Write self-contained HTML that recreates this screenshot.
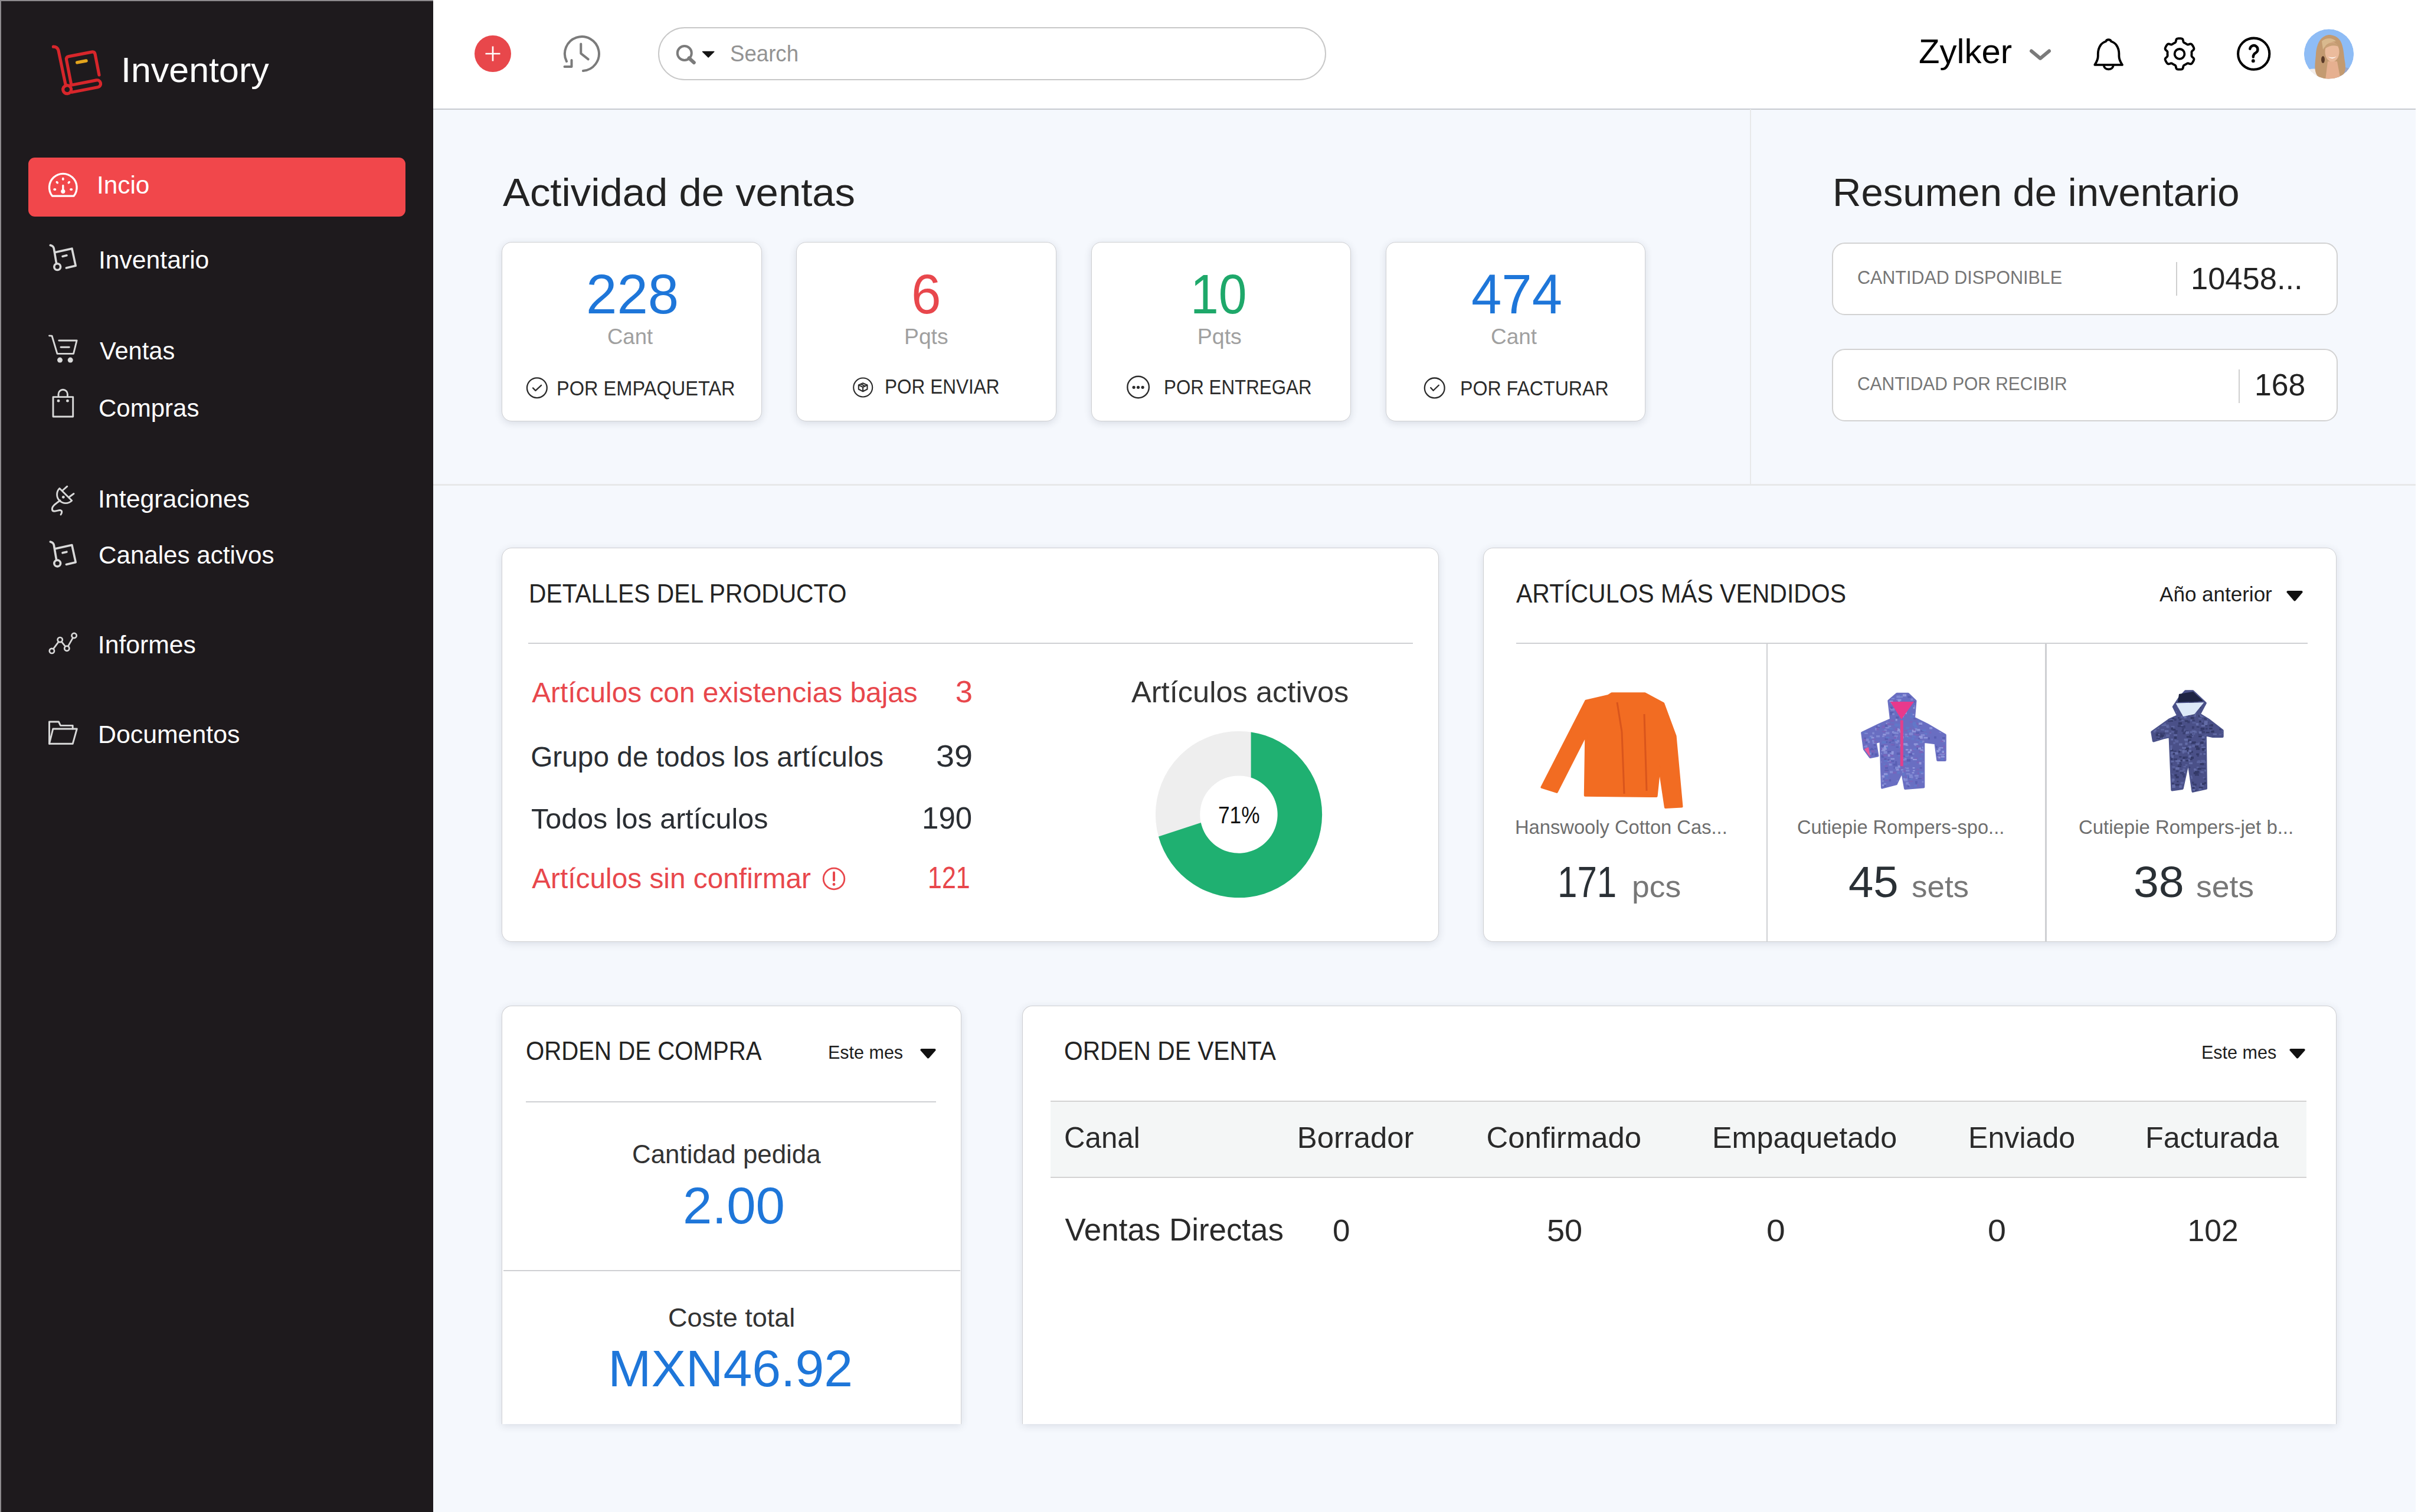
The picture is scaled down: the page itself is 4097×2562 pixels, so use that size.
<!DOCTYPE html>
<html><head><meta charset="utf-8"><title>Inventory</title>
<style>
html,body{margin:0;padding:0}
body{width:4097px;height:2562px;position:relative;overflow:hidden;background:#f5f8fd;font-family:"Liberation Sans",sans-serif}
.b{position:absolute}
.t{position:absolute;white-space:nowrap;line-height:1;font-family:"Liberation Sans",sans-serif;transform-origin:0 0}
</style></head><body>
<div class="b" style="left:0px;top:0px;width:734px;height:2562px;background:#1e1a1d"></div>
<div class="b" style="left:0px;top:0px;width:734px;height:1.5px;background:#8d8a8d"></div>
<div class="b" style="left:0px;top:0px;width:1.5px;height:2562px;background:#8d8a8d"></div>
<div class="b" style="left:48.3px;top:266.7px;width:638.3px;height:100px;background:#f1474b;border-radius:11px"></div>
<div class="b" style="left:734px;top:0px;width:3363px;height:183px;background:#ffffff"></div>
<div class="b" style="left:734px;top:183.5px;width:3359px;height:2px;background:#c9ccd0"></div>
<div class="b" style="left:4093px;top:0px;width:4px;height:2562px;background:#ffffff"></div>
<div class="b" style="left:1115px;top:46px;width:1132px;height:90px;border:2.5px solid #c8c8c8;border-radius:45px;box-sizing:border-box;background:#fff"></div>
<div class="b" style="left:734px;top:820px;width:3359px;height:3px;background:#e7e8e9"></div>
<div class="b" style="left:2964.8px;top:185px;width:2px;height:635px;background:#e8e9ea"></div>
<div class="b" style="left:850.2px;top:410px;width:440.8px;height:304.1px;background:#fff;border:1.5px solid #cfd0d3;border-radius:17px;box-sizing:border-box;box-shadow:0 3px 13px rgba(40,50,70,0.14)"></div>
<div class="b" style="left:1349.3px;top:410px;width:440.8px;height:304.1px;background:#fff;border:1.5px solid #cfd0d3;border-radius:17px;box-sizing:border-box;box-shadow:0 3px 13px rgba(40,50,70,0.14)"></div>
<div class="b" style="left:1848.5px;top:410px;width:440.8px;height:304.1px;background:#fff;border:1.5px solid #cfd0d3;border-radius:17px;box-sizing:border-box;box-shadow:0 3px 13px rgba(40,50,70,0.14)"></div>
<div class="b" style="left:2347.6px;top:410px;width:440.8px;height:304.1px;background:#fff;border:1.5px solid #cfd0d3;border-radius:17px;box-sizing:border-box;box-shadow:0 3px 13px rgba(40,50,70,0.14)"></div>
<div class="b" style="left:3104px;top:411px;width:856.5px;height:123px;background:#fff;border:2.5px solid #d2d2d2;border-radius:22px;box-sizing:border-box"></div>
<div class="b" style="left:3104px;top:591px;width:856.5px;height:123px;background:#fff;border:2.5px solid #d2d2d2;border-radius:22px;box-sizing:border-box"></div>
<div class="b" style="left:3687px;top:443.5px;width:2px;height:57px;background:#cfcfcf"></div>
<div class="b" style="left:3792.5px;top:626px;width:2px;height:57px;background:#cfcfcf"></div>
<div class="b" style="left:850.3px;top:928.1px;width:1587.4px;height:667.9px;background:#fff;border:1.5px solid #cfd0d3;box-sizing:border-box;box-shadow:0 3px 14px rgba(40,50,70,0.13);border-radius:17px"></div>
<div class="b" style="left:2513px;top:928.1px;width:1446.4px;height:667.9px;background:#fff;border:1.5px solid #cfd0d3;box-sizing:border-box;box-shadow:0 3px 14px rgba(40,50,70,0.13);border-radius:17px"></div>
<div class="b" style="left:850.3px;top:1703.8px;width:779.2px;height:709px;background:#fff;border:1.5px solid #cfd0d3;box-sizing:border-box;box-shadow:0 3px 14px rgba(40,50,70,0.13);border-radius:17px 17px 0 0;border-bottom:none"></div>
<div class="b" style="left:1731.7px;top:1703.8px;width:2227.7px;height:709px;background:#fff;border:1.5px solid #cfd0d3;box-sizing:border-box;box-shadow:0 3px 14px rgba(40,50,70,0.13);border-radius:17px 17px 0 0;border-bottom:none"></div>
<div class="b" style="left:894.5px;top:1088.5px;width:1499px;height:2.5px;background:#cfd0d3"></div>
<div class="b" style="left:2569px;top:1088.5px;width:1341px;height:2.5px;background:#cfd0d3"></div>
<div class="b" style="left:2992.5px;top:1090px;width:2.5px;height:505px;background:#cfd0d3"></div>
<div class="b" style="left:3465.4px;top:1090px;width:2.5px;height:505px;background:#cfd0d3"></div>
<div class="b" style="left:891px;top:1865.5px;width:694.6px;height:2.5px;background:#cfd0d3"></div>
<div class="b" style="left:853px;top:2151.5px;width:774px;height:2.5px;background:#cfd0d3"></div>
<div class="b" style="left:1780.4px;top:1865px;width:2127.6px;height:131px;background:#f4f6f6;border-top:2.5px solid #d3d3d3;border-bottom:2.5px solid #d3d3d3;box-sizing:border-box"></div>
<svg width="4097" height="2562" viewBox="0 0 4097 2562" style="position:absolute;left:0;top:0"><g transform="translate(113.7,151.7) rotate(-11)" fill="none" stroke="#d7262b" stroke-width="5.2" stroke-linecap="round" stroke-linejoin="round"><path d="M-9,-75.7 Q-2.5,-74.5 -1.8,-68 L-1,-7"/><circle cx="0" cy="0" r="7"/><path d="M8.5,-8 L8.5,-49.5 Q8.5,-54.5 13.5,-54.5 L53,-54.5 Q58,-54.5 58,-49.5 L58,-14"/><path d="M7,-6 L51.8,-6 A6,6 0 0 1 51.8,6 L7,6"/><path d="M25.5,-41.7 L41,-41.7" stroke="#e3a41d" stroke-width="5.5"/></g><g fill="none" stroke="#fff" stroke-width="3.3" stroke-linejoin="round" stroke-linecap="round"><path d="M88.5,332.1 A23.3,23.3 0 1 1 125.1,332.1 Z"/><path d="M106.8,314.5 L106.8,322"/></g><g fill="#fff"><circle cx="106.8" cy="324.3" r="3.6"/><ellipse cx="106.8" cy="303.2" rx="1.9" ry="2.7"/><ellipse cx="96.8" cy="309.2" rx="2.6" ry="1.9" transform="rotate(45 96.8 309.2)"/><ellipse cx="116.8" cy="309.2" rx="2.6" ry="1.9" transform="rotate(-45 116.8 309.2)"/><ellipse cx="92.8" cy="321" rx="2.6" ry="1.9"/><ellipse cx="120.6" cy="321" rx="2.6" ry="1.9"/></g><g fill="none" stroke="#d9d9d9" stroke-linecap="round" stroke-linejoin="round" stroke-width="3.6" transform="translate(0,0)"><path d="M85.3,415.6 Q90.5,417 91.3,421 L95.6,446.5"/><circle cx="97.2" cy="452.1" r="5.4"/><path d="M93.6,427.4 L121.9,421.2 L128.2,450.3 L112.3,454"/><path d="M106,434.4 L112.9,432.8"/></g><g fill="none" stroke="#d9d9d9" stroke-linecap="round" stroke-linejoin="round" stroke-width="3.6" transform="translate(0,502.4)"><path d="M85.3,415.6 Q90.5,417 91.3,421 L95.6,446.5"/><circle cx="97.2" cy="452.1" r="5.4"/><path d="M93.6,427.4 L121.9,421.2 L128.2,450.3 L112.3,454"/><path d="M106,434.4 L112.9,432.8"/></g><g fill="none" stroke="#d9d9d9" stroke-linecap="round" stroke-linejoin="round" stroke-width="2.9"><path d="M83.5,568.9 L88,569.1 L97,599.4 L124.5,599.4 L130.1,577 L99.8,577"/><path d="M103.1,588.2 L117.2,588.2"/></g><circle cx="101.5" cy="610.1" r="4.5" fill="#d9d9d9"/><circle cx="119.2" cy="610.1" r="4.5" fill="#d9d9d9"/><g fill="none" stroke="#d9d9d9" stroke-linecap="round" stroke-linejoin="round" stroke-width="2.9"><rect x="90" y="672.6" width="33.7" height="33.4"/><path d="M99,672 L99,667.9 A7.7,7.7 0 0 1 114.4,667.9 L114.4,672"/></g><circle cx="99" cy="679.2" r="2.4" fill="#d9d9d9"/><circle cx="114.4" cy="679.2" r="2.4" fill="#d9d9d9"/><g fill="none" stroke="#d9d9d9" stroke-linecap="round" stroke-linejoin="round" stroke-width="2.9"><path d="M100.9,827.5 L121.7,848.3 A14.7,14.7 0 0 1 100.9,827.5 Z"/><path d="M106,831 L113.8,824.2"/><path d="M117.5,842 L125,836.5"/><path d="M102,848 C95,853 87,858 88.5,864 C90,869 98,864 102,864.5 C106,865.5 105,869 103,872"/></g><circle cx="107.3" cy="842.3" r="2.4" fill="#d9d9d9"/><g fill="none" stroke="#d9d9d9" stroke-linecap="round" stroke-linejoin="round" stroke-width="2.7"><path d="M87.9,1102.9 L101.7,1084.1 L113.3,1098.7 L125.6,1077"/></g><circle cx="87.9" cy="1102.9" r="4.1" fill="#1e1a1d" stroke="#d9d9d9" stroke-width="2.7"/><circle cx="101.7" cy="1084.1" r="4.1" fill="#1e1a1d" stroke="#d9d9d9" stroke-width="2.7"/><circle cx="113.3" cy="1098.7" r="4.1" fill="#1e1a1d" stroke="#d9d9d9" stroke-width="2.7"/><circle cx="125.6" cy="1077" r="4.1" fill="#1e1a1d" stroke="#d9d9d9" stroke-width="2.7"/><g fill="none" stroke="#d9d9d9" stroke-linecap="round" stroke-linejoin="round" stroke-width="2.9"><path d="M83.5,1260.3 L83.5,1223 L99.4,1223 L102.5,1229.4 L123.2,1229.4 L123.2,1235"/><path d="M89.8,1235 L130.3,1235 L123.2,1260.3 L83.5,1260.3 Z"/></g><circle cx="835" cy="91" r="31" fill="#e8474b"/><path d="M822.5,91 L847.5,91 M835,78.5 L835,103.5" stroke="#fff" stroke-width="2.7"/><g fill="none" stroke="#7b7b7b" stroke-width="4" stroke-linecap="round" stroke-linejoin="round"><path d="M988,120 A29,29 0 1 0 960,104"/><path d="M968.5,102 L968.5,113 L956.5,113"/><path d="M984.3,74.5 L984.3,90.6 L996.7,100.3"/></g><g fill="none" stroke="#7b7b7b" stroke-linecap="round"><circle cx="1159.8" cy="90" r="12" stroke-width="4"/><path d="M1167.5,98.5 L1175.8,106" stroke-width="6"/></g><path d="M1190.5,87.5 L1209.8,87.5 L1200.2,97 Z" fill="#151515" stroke="#151515" stroke-width="1.5" stroke-linejoin="round"/><path d="M3442,86.5 L3457,99 L3472,86.5" fill="none" stroke="#7a7a7a" stroke-width="6" stroke-linecap="round" stroke-linejoin="round"/><g fill="none" stroke="#000" stroke-width="3.8" stroke-linecap="round" stroke-linejoin="round"><path d="M3549.3,109.8 C3552.5,105 3554.8,101 3554.8,95 L3554.8,91 C3555,80 3560.5,72.5 3568,70.3 A5,5 0 0 1 3577.2,70.3 C3584.7,72.5 3590.2,80 3590.4,91 L3590.4,95 C3590.4,101 3592.7,105 3595.9,109.8 Z"/><path d="M3564.8,111.5 A8,7 0 0 0 3580.6,111.5"/></g><g fill="none" stroke="#000" stroke-width="3.8" stroke-linejoin="round"><path d="M3713.50,91.40 L3713.50,91.76 L3713.49,92.12 L3713.48,92.47 L3713.46,92.83 L3713.45,93.19 L3713.43,93.55 L3713.41,93.91 L3713.41,94.27 L3713.43,94.64 L3713.50,95.01 L3713.64,95.41 L3713.89,95.84 L3714.31,96.32 L3714.90,96.86 L3715.60,97.46 L3716.29,98.08 L3716.84,98.69 L3717.20,99.26 L3717.37,99.79 L3717.42,100.29 L3717.38,100.76 L3717.28,101.21 L3717.15,101.65 L3716.99,102.08 L3716.81,102.50 L3716.63,102.92 L3716.43,103.34 L3716.22,103.75 L3716.00,104.15 L3715.78,104.55 L3715.54,104.95 L3715.30,105.34 L3715.05,105.72 L3714.79,106.10 L3714.52,106.47 L3714.24,106.83 L3713.95,107.19 L3713.64,107.52 L3713.29,107.83 L3712.91,108.10 L3712.46,108.31 L3711.91,108.42 L3711.23,108.40 L3710.43,108.23 L3709.55,107.95 L3708.68,107.63 L3707.91,107.39 L3707.29,107.27 L3706.79,107.27 L3706.38,107.34 L3706.02,107.48 L3705.69,107.64 L3705.38,107.83 L3705.07,108.02 L3704.77,108.21 L3704.47,108.41 L3704.17,108.60 L3703.86,108.79 L3703.56,108.97 L3703.25,109.15 L3702.94,109.33 L3702.63,109.50 L3702.31,109.67 L3701.99,109.84 L3701.67,110.00 L3701.35,110.16 L3701.04,110.33 L3700.72,110.51 L3700.41,110.71 L3700.12,110.96 L3699.84,111.28 L3699.60,111.71 L3699.39,112.31 L3699.22,113.09 L3699.06,114.00 L3698.86,114.91 L3698.61,115.69 L3698.29,116.29 L3697.92,116.70 L3697.51,116.99 L3697.08,117.19 L3696.64,117.33 L3696.20,117.44 L3695.74,117.52 L3695.29,117.58 L3694.83,117.62 L3694.38,117.66 L3693.92,117.68 L3693.46,117.70 L3693.00,117.70 L3692.54,117.70 L3692.08,117.68 L3691.62,117.66 L3691.17,117.62 L3690.71,117.58 L3690.26,117.52 L3689.80,117.44 L3689.36,117.33 L3688.92,117.19 L3688.49,116.99 L3688.08,116.70 L3687.71,116.29 L3687.39,115.69 L3687.14,114.91 L3686.94,114.00 L3686.78,113.09 L3686.61,112.31 L3686.40,111.71 L3686.16,111.28 L3685.88,110.96 L3685.59,110.71 L3685.28,110.51 L3684.96,110.33 L3684.65,110.16 L3684.33,110.00 L3684.01,109.84 L3683.69,109.67 L3683.37,109.50 L3683.06,109.33 L3682.75,109.15 L3682.44,108.97 L3682.14,108.79 L3681.83,108.60 L3681.53,108.41 L3681.23,108.21 L3680.93,108.02 L3680.62,107.83 L3680.31,107.64 L3679.98,107.48 L3679.62,107.34 L3679.21,107.27 L3678.71,107.27 L3678.09,107.39 L3677.32,107.63 L3676.45,107.95 L3675.57,108.23 L3674.77,108.40 L3674.09,108.42 L3673.54,108.31 L3673.09,108.10 L3672.71,107.83 L3672.36,107.52 L3672.05,107.19 L3671.76,106.83 L3671.48,106.47 L3671.21,106.10 L3670.95,105.72 L3670.70,105.34 L3670.46,104.95 L3670.22,104.55 L3670.00,104.15 L3669.78,103.75 L3669.57,103.34 L3669.37,102.92 L3669.19,102.50 L3669.01,102.08 L3668.85,101.65 L3668.72,101.21 L3668.62,100.76 L3668.58,100.29 L3668.63,99.79 L3668.80,99.26 L3669.16,98.69 L3669.71,98.08 L3670.40,97.46 L3671.10,96.86 L3671.69,96.32 L3672.11,95.84 L3672.36,95.41 L3672.50,95.01 L3672.57,94.64 L3672.59,94.27 L3672.59,93.91 L3672.57,93.55 L3672.55,93.19 L3672.54,92.83 L3672.52,92.47 L3672.51,92.12 L3672.50,91.76 L3672.50,91.40 L3672.50,91.04 L3672.51,90.68 L3672.52,90.33 L3672.54,89.97 L3672.55,89.61 L3672.57,89.25 L3672.59,88.89 L3672.59,88.53 L3672.57,88.16 L3672.50,87.79 L3672.36,87.39 L3672.11,86.96 L3671.69,86.48 L3671.10,85.94 L3670.40,85.34 L3669.71,84.72 L3669.16,84.11 L3668.80,83.54 L3668.63,83.01 L3668.58,82.51 L3668.62,82.04 L3668.72,81.59 L3668.85,81.15 L3669.01,80.72 L3669.19,80.30 L3669.37,79.88 L3669.57,79.46 L3669.78,79.05 L3670.00,78.65 L3670.22,78.25 L3670.46,77.85 L3670.70,77.46 L3670.95,77.08 L3671.21,76.70 L3671.48,76.33 L3671.76,75.97 L3672.05,75.61 L3672.36,75.28 L3672.71,74.97 L3673.09,74.70 L3673.54,74.49 L3674.09,74.38 L3674.77,74.40 L3675.57,74.57 L3676.45,74.85 L3677.32,75.17 L3678.09,75.41 L3678.71,75.53 L3679.21,75.53 L3679.62,75.46 L3679.98,75.32 L3680.31,75.16 L3680.62,74.97 L3680.93,74.78 L3681.23,74.59 L3681.53,74.39 L3681.83,74.20 L3682.14,74.01 L3682.44,73.83 L3682.75,73.65 L3683.06,73.47 L3683.37,73.30 L3683.69,73.13 L3684.01,72.96 L3684.33,72.80 L3684.65,72.64 L3684.96,72.47 L3685.28,72.29 L3685.59,72.09 L3685.88,71.84 L3686.16,71.52 L3686.40,71.09 L3686.61,70.49 L3686.78,69.71 L3686.94,68.80 L3687.14,67.89 L3687.39,67.11 L3687.71,66.51 L3688.08,66.10 L3688.49,65.81 L3688.92,65.61 L3689.36,65.47 L3689.80,65.36 L3690.26,65.28 L3690.71,65.22 L3691.17,65.18 L3691.62,65.14 L3692.08,65.12 L3692.54,65.10 L3693.00,65.10 L3693.46,65.10 L3693.92,65.12 L3694.38,65.14 L3694.83,65.18 L3695.29,65.22 L3695.74,65.28 L3696.20,65.36 L3696.64,65.47 L3697.08,65.61 L3697.51,65.81 L3697.92,66.10 L3698.29,66.51 L3698.61,67.11 L3698.86,67.89 L3699.06,68.80 L3699.22,69.71 L3699.39,70.49 L3699.60,71.09 L3699.84,71.52 L3700.12,71.84 L3700.41,72.09 L3700.72,72.29 L3701.04,72.47 L3701.35,72.64 L3701.67,72.80 L3701.99,72.96 L3702.31,73.13 L3702.63,73.30 L3702.94,73.47 L3703.25,73.65 L3703.56,73.83 L3703.86,74.01 L3704.17,74.20 L3704.47,74.39 L3704.77,74.59 L3705.07,74.78 L3705.38,74.97 L3705.69,75.16 L3706.02,75.32 L3706.38,75.46 L3706.79,75.53 L3707.29,75.53 L3707.91,75.41 L3708.68,75.17 L3709.55,74.85 L3710.43,74.57 L3711.23,74.40 L3711.91,74.38 L3712.46,74.49 L3712.91,74.70 L3713.29,74.97 L3713.64,75.28 L3713.95,75.61 L3714.24,75.97 L3714.52,76.33 L3714.79,76.70 L3715.05,77.08 L3715.30,77.46 L3715.54,77.85 L3715.78,78.25 L3716.00,78.65 L3716.22,79.05 L3716.43,79.46 L3716.63,79.88 L3716.81,80.30 L3716.99,80.72 L3717.15,81.15 L3717.28,81.59 L3717.38,82.04 L3717.42,82.51 L3717.37,83.01 L3717.20,83.54 L3716.84,84.11 L3716.29,84.72 L3715.60,85.34 L3714.90,85.94 L3714.31,86.48 L3713.89,86.96 L3713.64,87.39 L3713.50,87.79 L3713.43,88.16 L3713.41,88.53 L3713.41,88.89 L3713.43,89.25 L3713.45,89.61 L3713.46,89.97 L3713.48,90.33 L3713.49,90.68 L3713.50,91.04 Z"/><circle cx="3693" cy="91.4" r="8.4"/></g><g fill="none" stroke="#000" stroke-linecap="round"><circle cx="3818.7" cy="91.2" r="26.6" stroke-width="4.1"/><path d="M3812.3,82.8 A6.6,6.6 0 1 1 3822.5,89.2 C3819,91 3817.8,93 3817.8,96.5" stroke-width="4.4"/></g><circle cx="3817.8" cy="103.2" r="2.9" fill="#000"/><defs><clipPath id="av"><circle cx="3946" cy="91.4" r="42.2"/></clipPath></defs><g clip-path="url(#av)"><circle cx="3946" cy="91.4" r="42.2" fill="#8ebcf5"/><path d="M3900,122 C3912,116 3924,114 3934,120 L3940,136 L3895,136 Z" fill="#f3ede9"/><path d="M3962,114 C3972,112 3984,116 3990,122 L3990,136 L3960,136 Z" fill="#9aa6c8"/><path d="M3946,59 C3931,61 3925,76 3924,92 C3923,106 3920,118 3926,128 C3930,134 3944,136 3952,132 L3962,134 C3972,130 3976,118 3973,104 C3971,92 3971,74 3963,66 C3958,61 3952,59 3946,59 Z" fill="#c39a70"/><path d="M3934,70 C3940,64 3952,63 3958,70 C3950,70 3942,74 3936,84 Z" fill="#d9b98e"/><path d="M3944,104 L3960,104 L3966,136 L3940,136 Z" fill="#e6b090"/><ellipse cx="3951.5" cy="88" rx="12" ry="16.5" fill="#ebbb9c"/><path d="M3940,78 C3946,70 3958,70 3964,80 C3958,76 3948,76 3940,82 Z" fill="#c8a077"/><path d="M3944.5,96 Q3952,102.5 3959,95.5 Q3952,99 3944.5,96 Z" fill="#fff"/><ellipse cx="3936" cy="101" rx="3" ry="6" fill="#5a3a28"/></g><g fill="none" stroke="#2b2b2b" stroke-linecap="round" stroke-linejoin="round" stroke-width="2.3"><circle cx="909.85" cy="657.2" r="16.9"/><path d="M903,657.4 L907.4,661.9 L917.1,652.8"/></g><g fill="none" stroke="#2b2b2b" stroke-linecap="round" stroke-linejoin="round" stroke-width="2.1"><circle cx="1462.2" cy="656.5" r="16"/><path d="M1462.1,649.2 L1469.5,652.4 L1469.5,659.5 L1462.1,663.3 L1454.8,659.5 L1454.8,652.4 Z M1454.8,652.4 L1462.1,656 L1469.5,652.4 M1462.1,656 L1462.1,663.3 M1458.5,650.8 L1466,654.4"/></g><g fill="none" stroke="#2b2b2b" stroke-linecap="round" stroke-linejoin="round" stroke-width="2.4"><circle cx="1928.6" cy="656" r="18.3"/></g><g fill="#2b2b2b"><circle cx="1921.1" cy="656.3" r="2.6"/><circle cx="1928.5" cy="656.3" r="2.6"/><circle cx="1936.1" cy="656.3" r="2.6"/></g><g fill="none" stroke="#2b2b2b" stroke-linecap="round" stroke-linejoin="round" stroke-width="2.3"><circle cx="2430.7" cy="657.4" r="16.9"/><path d="M2424.2,656.9 L2428.5,661.8 L2437.8,652.7"/></g><g fill="none" stroke="#e8474c" stroke-linecap="round"><circle cx="1413" cy="1489" r="17.8" stroke-width="2.8"/><path d="M1413,1478.5 L1413,1491.5" stroke-width="4"/></g><circle cx="1413" cy="1498.5" r="2.4" fill="#e8474c"/><path d="M3876.5,1003 L3899.6,1003 L3888.05,1016.5 Z" fill="#111" stroke="#111" stroke-width="4" stroke-linejoin="round"/><path d="M1561.5,1779 L1583.6,1779 L1572.55,1791.5 Z" fill="#111" stroke="#111" stroke-width="4" stroke-linejoin="round"/><path d="M3881.5,1779 L3903.7,1779 L3892.6,1791.5 Z" fill="#111" stroke="#111" stroke-width="4" stroke-linejoin="round"/><circle cx="2099" cy="1380.1" r="103.4" fill="none" stroke="#eeeeee" stroke-width="75.4"/><path d="M2119.6,1240.4 A141.1,141.1 0 1 1 1963,1417.5 L2034.8,1394.1 A65.7,65.7 0 1 0 2119.6,1317.6 Z" fill="#1fb071"/><path d="M2731,1175.3 L2787,1175.3 L2818.2,1192 L2838.6,1247.3 L2849.5,1366.6 L2821.9,1368 L2811.7,1299.7 L2806.6,1349.1 L2685.8,1347.7 L2687.3,1244.4 L2637.8,1341.9 L2612.4,1333.9 L2687.3,1187.6 L2725.1,1179 Z" fill="#f26c22" stroke="#f26c22" stroke-width="4" stroke-linejoin="round"/><path d="M2740,1190 L2748,1240 M2786,1210 L2790,1340 M2748,1240 L2752,1345" stroke="#d9551c" stroke-width="3" fill="none"/><path d="M3214.1,1175.7 L3233,1175.7 L3245.5,1187.6 L3243,1216.5 L3265.6,1227.8 L3295.8,1245.4 L3295.8,1288.1 L3283.2,1288.1 L3279.4,1259.2 L3259.3,1256.7 L3259.3,1333.4 L3228,1335.9 L3222.9,1307 L3212.9,1328.3 L3189,1334.6 L3186.5,1255.5 L3177.7,1258 L3181.5,1280.6 L3168.9,1283.1 L3158.8,1269.3 L3155.1,1241.7 L3184,1227.8 L3204,1219 L3200.3,1187.6 Z" fill="#6a6fc2" stroke="#6a6fc2" stroke-width="4" stroke-linejoin="round"/><defs><clipPath id="m1"><path d="M3214.1,1175.7 L3233,1175.7 L3245.5,1187.6 L3243,1216.5 L3265.6,1227.8 L3295.8,1245.4 L3295.8,1288.1 L3283.2,1288.1 L3279.4,1259.2 L3259.3,1256.7 L3259.3,1333.4 L3228,1335.9 L3222.9,1307 L3212.9,1328.3 L3189,1334.6 L3186.5,1255.5 L3177.7,1258 L3181.5,1280.6 L3168.9,1283.1 L3158.8,1269.3 L3155.1,1241.7 L3184,1227.8 L3204,1219 L3200.3,1187.6 Z"/></clipPath></defs><g clip-path="url(#m1)" opacity="0.8"><rect x="3200.7" y="1199.9" width="5.6" height="2.2" fill="#9ba2e2"/><rect x="3168.3" y="1269.1" width="6.6" height="2.5" fill="#565cb0"/><rect x="3216.1" y="1186.9" width="3.4" height="3.1" fill="#9ba2e2"/><rect x="3172.5" y="1211.5" width="5.5" height="4.4" fill="#9ba2e2"/><rect x="3237.5" y="1183.6" width="3.9" height="3.4" fill="#8790d8"/><rect x="3195.8" y="1198.8" width="3.5" height="2.8" fill="#8790d8"/><rect x="3169.6" y="1267.2" width="3.8" height="2.2" fill="#565cb0"/><rect x="3234.5" y="1274.9" width="5.0" height="3.3" fill="#7b63b9"/><rect x="3220.6" y="1323.6" width="4.4" height="2.6" fill="#8790d8"/><rect x="3253.4" y="1214.8" width="5.3" height="3.3" fill="#7b63b9"/><rect x="3257.7" y="1221.8" width="6.9" height="2.3" fill="#5f7bcb"/><rect x="3178.3" y="1230.5" width="6.7" height="3.1" fill="#565cb0"/><rect x="3262.7" y="1267.5" width="6.5" height="2.8" fill="#7b63b9"/><rect x="3238.7" y="1268.6" width="4.8" height="4.1" fill="#7b63b9"/><rect x="3221.8" y="1282.1" width="3.2" height="3.8" fill="#9ba2e2"/><rect x="3294.8" y="1307.4" width="4.1" height="3.0" fill="#7b63b9"/><rect x="3158.3" y="1249.7" width="3.7" height="2.3" fill="#565cb0"/><rect x="3185.8" y="1221.7" width="6.0" height="3.0" fill="#5f7bcb"/><rect x="3166.4" y="1247.7" width="5.2" height="4.2" fill="#5f7bcb"/><rect x="3276.7" y="1220.3" width="4.7" height="2.9" fill="#5f7bcb"/><rect x="3289.9" y="1199.9" width="3.7" height="2.6" fill="#8790d8"/><rect x="3156.8" y="1308.8" width="3.7" height="2.7" fill="#8790d8"/><rect x="3214.0" y="1234.9" width="5.3" height="4.4" fill="#9ba2e2"/><rect x="3288.8" y="1280.6" width="6.0" height="3.1" fill="#9ba2e2"/><rect x="3210.3" y="1239.6" width="3.4" height="3.6" fill="#565cb0"/><rect x="3181.9" y="1333.4" width="4.8" height="2.3" fill="#9ba2e2"/><rect x="3162.5" y="1175.7" width="3.6" height="2.3" fill="#7b63b9"/><rect x="3241.5" y="1187.0" width="3.8" height="2.9" fill="#7b63b9"/><rect x="3289.5" y="1272.2" width="4.9" height="2.3" fill="#5f7bcb"/><rect x="3294.8" y="1250.4" width="4.9" height="2.2" fill="#565cb0"/><rect x="3260.6" y="1294.3" width="4.9" height="3.7" fill="#9ba2e2"/><rect x="3158.3" y="1328.0" width="5.1" height="2.4" fill="#9ba2e2"/><rect x="3283.7" y="1297.2" width="4.2" height="3.6" fill="#565cb0"/><rect x="3253.1" y="1217.5" width="4.5" height="2.4" fill="#8790d8"/><rect x="3230.0" y="1300.5" width="4.3" height="2.6" fill="#8790d8"/><rect x="3268.5" y="1306.8" width="6.0" height="2.6" fill="#9ba2e2"/><rect x="3224.4" y="1292.8" width="7.0" height="4.0" fill="#5f7bcb"/><rect x="3191.6" y="1286.6" width="6.8" height="3.1" fill="#7b63b9"/><rect x="3289.5" y="1234.1" width="3.9" height="2.6" fill="#8790d8"/><rect x="3202.6" y="1253.0" width="6.9" height="3.5" fill="#565cb0"/><rect x="3222.6" y="1280.3" width="6.2" height="2.2" fill="#565cb0"/><rect x="3283.1" y="1301.0" width="6.0" height="3.2" fill="#8790d8"/><rect x="3216.2" y="1277.6" width="3.3" height="4.4" fill="#5f7bcb"/><rect x="3220.3" y="1294.8" width="3.3" height="2.4" fill="#8790d8"/><rect x="3159.0" y="1270.3" width="4.9" height="3.6" fill="#9ba2e2"/><rect x="3271.4" y="1332.7" width="5.6" height="2.9" fill="#9ba2e2"/><rect x="3232.2" y="1179.1" width="6.2" height="3.8" fill="#565cb0"/><rect x="3229.2" y="1325.3" width="4.7" height="4.2" fill="#8790d8"/><rect x="3159.0" y="1209.8" width="5.0" height="3.9" fill="#7b63b9"/><rect x="3191.6" y="1242.8" width="3.5" height="4.3" fill="#7b63b9"/><rect x="3281.4" y="1281.8" width="6.3" height="3.3" fill="#9ba2e2"/><rect x="3173.5" y="1200.0" width="5.0" height="4.2" fill="#8790d8"/><rect x="3240.7" y="1300.0" width="3.6" height="2.4" fill="#9ba2e2"/><rect x="3257.1" y="1264.8" width="4.3" height="3.3" fill="#9ba2e2"/><rect x="3223.0" y="1300.1" width="6.5" height="2.1" fill="#8790d8"/><rect x="3194.1" y="1299.4" width="5.0" height="3.4" fill="#565cb0"/><rect x="3217.5" y="1273.8" width="5.0" height="3.3" fill="#7b63b9"/><rect x="3218.7" y="1261.1" width="4.9" height="4.4" fill="#9ba2e2"/><rect x="3278.4" y="1326.6" width="4.0" height="3.4" fill="#8790d8"/><rect x="3273.3" y="1197.7" width="3.5" height="3.1" fill="#565cb0"/><rect x="3249.5" y="1244.3" width="3.9" height="2.8" fill="#565cb0"/><rect x="3281.3" y="1200.4" width="5.9" height="3.7" fill="#8790d8"/><rect x="3190.7" y="1197.7" width="4.9" height="3.9" fill="#565cb0"/><rect x="3211.1" y="1253.8" width="7.0" height="4.1" fill="#8790d8"/><rect x="3254.5" y="1335.0" width="4.6" height="3.1" fill="#7b63b9"/><rect x="3199.9" y="1291.4" width="3.1" height="3.4" fill="#5f7bcb"/><rect x="3254.0" y="1237.3" width="5.1" height="2.7" fill="#565cb0"/><rect x="3171.0" y="1322.9" width="3.9" height="4.2" fill="#565cb0"/><rect x="3192.5" y="1182.0" width="6.1" height="2.7" fill="#8790d8"/><rect x="3270.4" y="1311.8" width="5.7" height="4.4" fill="#5f7bcb"/><rect x="3176.1" y="1323.0" width="5.3" height="3.8" fill="#565cb0"/><rect x="3194.4" y="1303.8" width="3.7" height="4.2" fill="#7b63b9"/><rect x="3287.1" y="1277.3" width="6.2" height="2.2" fill="#8790d8"/><rect x="3164.5" y="1313.9" width="4.8" height="2.8" fill="#9ba2e2"/><rect x="3213.9" y="1322.4" width="5.5" height="2.1" fill="#8790d8"/><rect x="3287.1" y="1331.0" width="4.0" height="2.5" fill="#7b63b9"/><rect x="3243.6" y="1260.8" width="3.8" height="3.1" fill="#8790d8"/><rect x="3193.2" y="1304.4" width="7.0" height="2.1" fill="#565cb0"/><rect x="3258.2" y="1264.0" width="3.8" height="3.2" fill="#5f7bcb"/><rect x="3170.1" y="1306.9" width="4.7" height="3.2" fill="#5f7bcb"/><rect x="3291.6" y="1225.0" width="3.9" height="2.6" fill="#8790d8"/><rect x="3272.2" y="1288.9" width="5.5" height="3.0" fill="#7b63b9"/><rect x="3293.3" y="1309.8" width="3.1" height="3.6" fill="#7b63b9"/><rect x="3215.7" y="1184.6" width="5.7" height="3.0" fill="#9ba2e2"/><rect x="3249.4" y="1220.9" width="4.0" height="2.7" fill="#5f7bcb"/><rect x="3181.2" y="1218.8" width="3.0" height="2.9" fill="#7b63b9"/><rect x="3291.9" y="1263.3" width="4.0" height="4.4" fill="#7b63b9"/><rect x="3185.8" y="1205.0" width="4.3" height="2.2" fill="#7b63b9"/><rect x="3225.8" y="1207.9" width="5.0" height="2.0" fill="#7b63b9"/><rect x="3270.1" y="1198.7" width="5.3" height="3.0" fill="#7b63b9"/><rect x="3197.9" y="1213.0" width="5.3" height="3.3" fill="#8790d8"/><rect x="3247.6" y="1290.4" width="6.5" height="3.0" fill="#7b63b9"/><rect x="3256.5" y="1254.9" width="4.1" height="3.5" fill="#8790d8"/><rect x="3161.3" y="1309.5" width="6.6" height="3.6" fill="#9ba2e2"/><rect x="3174.7" y="1259.6" width="5.0" height="4.1" fill="#565cb0"/><rect x="3271.4" y="1269.3" width="6.6" height="3.7" fill="#8790d8"/><rect x="3167.1" y="1182.4" width="5.5" height="4.4" fill="#5f7bcb"/><rect x="3272.7" y="1265.2" width="5.5" height="3.6" fill="#8790d8"/><rect x="3223.9" y="1176.2" width="6.2" height="3.9" fill="#9ba2e2"/><rect x="3281.4" y="1190.4" width="5.1" height="3.9" fill="#5f7bcb"/><rect x="3190.6" y="1187.6" width="4.1" height="3.8" fill="#8790d8"/><rect x="3187.6" y="1279.8" width="4.8" height="4.1" fill="#565cb0"/><rect x="3222.5" y="1285.2" width="6.1" height="3.5" fill="#8790d8"/><rect x="3166.0" y="1199.3" width="4.0" height="3.9" fill="#7b63b9"/><rect x="3242.5" y="1197.1" width="4.9" height="3.2" fill="#565cb0"/><rect x="3252.5" y="1283.9" width="4.2" height="3.3" fill="#5f7bcb"/><rect x="3220.7" y="1298.6" width="7.0" height="3.4" fill="#7b63b9"/><rect x="3292.7" y="1325.7" width="3.1" height="3.1" fill="#9ba2e2"/><rect x="3291.3" y="1247.7" width="4.1" height="2.5" fill="#8790d8"/><rect x="3165.6" y="1190.2" width="6.0" height="2.7" fill="#7b63b9"/><rect x="3173.8" y="1307.1" width="5.0" height="4.2" fill="#7b63b9"/><rect x="3187.7" y="1319.5" width="4.9" height="2.1" fill="#565cb0"/><rect x="3288.8" y="1284.9" width="4.6" height="3.8" fill="#5f7bcb"/><rect x="3203.5" y="1226.3" width="6.4" height="2.0" fill="#7b63b9"/><rect x="3273.2" y="1194.9" width="6.7" height="3.8" fill="#7b63b9"/><rect x="3190.7" y="1186.1" width="4.6" height="4.2" fill="#565cb0"/><rect x="3205.9" y="1244.3" width="4.1" height="2.1" fill="#565cb0"/><rect x="3162.4" y="1281.7" width="5.5" height="2.4" fill="#7b63b9"/><rect x="3216.5" y="1226.3" width="6.1" height="4.0" fill="#5f7bcb"/><rect x="3279.5" y="1305.8" width="5.5" height="4.3" fill="#9ba2e2"/><rect x="3232.4" y="1291.0" width="3.2" height="3.8" fill="#5f7bcb"/><rect x="3241.6" y="1197.9" width="6.5" height="3.2" fill="#9ba2e2"/><rect x="3173.0" y="1251.3" width="4.4" height="2.7" fill="#7b63b9"/><rect x="3212.3" y="1213.9" width="4.9" height="3.7" fill="#565cb0"/><rect x="3178.6" y="1201.6" width="3.8" height="4.3" fill="#5f7bcb"/><rect x="3232.5" y="1248.3" width="4.3" height="3.9" fill="#5f7bcb"/><rect x="3174.7" y="1206.5" width="3.4" height="2.9" fill="#565cb0"/><rect x="3200.0" y="1234.7" width="6.2" height="2.5" fill="#565cb0"/><rect x="3260.6" y="1241.8" width="4.7" height="3.3" fill="#5f7bcb"/><rect x="3193.1" y="1296.2" width="5.0" height="3.4" fill="#7b63b9"/><rect x="3172.8" y="1256.3" width="5.5" height="4.2" fill="#8790d8"/><rect x="3168.1" y="1319.4" width="4.5" height="3.6" fill="#5f7bcb"/><rect x="3289.3" y="1311.7" width="6.5" height="2.1" fill="#565cb0"/><rect x="3214.9" y="1298.0" width="6.2" height="4.4" fill="#5f7bcb"/><rect x="3155.1" y="1238.4" width="6.7" height="4.1" fill="#5f7bcb"/><rect x="3291.9" y="1215.5" width="3.4" height="2.4" fill="#9ba2e2"/><rect x="3291.8" y="1193.1" width="6.3" height="3.8" fill="#5f7bcb"/><rect x="3167.1" y="1300.2" width="3.0" height="2.3" fill="#9ba2e2"/><rect x="3284.5" y="1279.1" width="4.2" height="2.3" fill="#7b63b9"/><rect x="3229.4" y="1245.8" width="6.1" height="2.2" fill="#7b63b9"/><rect x="3228.9" y="1269.1" width="4.6" height="2.6" fill="#9ba2e2"/><rect x="3155.3" y="1261.8" width="7.0" height="2.7" fill="#7b63b9"/><rect x="3245.8" y="1317.3" width="4.9" height="2.6" fill="#8790d8"/><rect x="3159.2" y="1241.7" width="5.6" height="2.1" fill="#8790d8"/><rect x="3225.2" y="1283.7" width="4.7" height="2.6" fill="#5f7bcb"/><rect x="3285.3" y="1212.0" width="3.1" height="2.8" fill="#5f7bcb"/><rect x="3206.1" y="1239.2" width="3.0" height="2.7" fill="#9ba2e2"/><rect x="3164.6" y="1255.1" width="3.8" height="3.9" fill="#8790d8"/><rect x="3187.6" y="1211.2" width="6.0" height="2.7" fill="#9ba2e2"/><rect x="3224.9" y="1205.7" width="3.9" height="3.0" fill="#565cb0"/><rect x="3288.6" y="1199.2" width="4.6" height="2.5" fill="#9ba2e2"/><rect x="3175.1" y="1184.0" width="3.2" height="3.0" fill="#7b63b9"/><rect x="3258.2" y="1335.5" width="6.7" height="2.8" fill="#8790d8"/><rect x="3246.9" y="1259.8" width="4.9" height="2.8" fill="#5f7bcb"/><rect x="3273.2" y="1333.5" width="4.8" height="2.3" fill="#565cb0"/><rect x="3194.5" y="1232.0" width="6.8" height="2.3" fill="#8790d8"/><rect x="3208.6" y="1298.9" width="4.2" height="4.0" fill="#565cb0"/><rect x="3162.0" y="1251.5" width="4.5" height="4.3" fill="#8790d8"/><rect x="3200.6" y="1293.8" width="4.9" height="3.6" fill="#8790d8"/><rect x="3269.3" y="1298.5" width="3.2" height="2.1" fill="#565cb0"/><rect x="3268.1" y="1185.6" width="3.8" height="2.2" fill="#9ba2e2"/><rect x="3202.8" y="1219.3" width="6.8" height="3.5" fill="#7b63b9"/><rect x="3260.1" y="1286.2" width="6.7" height="2.7" fill="#9ba2e2"/><rect x="3284.0" y="1277.3" width="6.8" height="2.1" fill="#8790d8"/><rect x="3170.2" y="1290.3" width="4.9" height="3.9" fill="#7b63b9"/><rect x="3283.6" y="1306.2" width="3.5" height="3.2" fill="#565cb0"/><rect x="3268.0" y="1294.0" width="6.3" height="3.9" fill="#9ba2e2"/><rect x="3188.3" y="1313.7" width="4.8" height="4.0" fill="#9ba2e2"/><rect x="3166.2" y="1207.3" width="6.0" height="2.6" fill="#565cb0"/><rect x="3246.5" y="1252.9" width="5.2" height="2.4" fill="#5f7bcb"/><rect x="3279.4" y="1333.9" width="4.1" height="2.2" fill="#565cb0"/><rect x="3214.3" y="1334.0" width="6.9" height="2.4" fill="#8790d8"/><rect x="3213.7" y="1275.1" width="5.7" height="3.9" fill="#565cb0"/><rect x="3264.8" y="1222.8" width="4.1" height="2.7" fill="#7b63b9"/><rect x="3258.9" y="1207.6" width="4.0" height="2.6" fill="#8790d8"/><rect x="3194.7" y="1321.1" width="3.8" height="2.2" fill="#7b63b9"/><rect x="3294.7" y="1257.0" width="3.9" height="4.0" fill="#5f7bcb"/><rect x="3294.5" y="1192.1" width="4.9" height="4.0" fill="#5f7bcb"/><rect x="3283.8" y="1182.2" width="4.2" height="2.3" fill="#8790d8"/><rect x="3239.6" y="1308.3" width="3.8" height="2.2" fill="#9ba2e2"/><rect x="3277.0" y="1247.6" width="4.0" height="3.9" fill="#565cb0"/><rect x="3170.0" y="1271.2" width="5.5" height="2.5" fill="#7b63b9"/><rect x="3202.9" y="1182.8" width="7.0" height="2.1" fill="#8790d8"/><rect x="3269.7" y="1306.9" width="4.6" height="2.9" fill="#9ba2e2"/><rect x="3199.0" y="1208.3" width="6.2" height="3.4" fill="#565cb0"/><rect x="3212.5" y="1303.2" width="5.7" height="2.4" fill="#9ba2e2"/><rect x="3167.9" y="1201.9" width="5.8" height="3.0" fill="#7b63b9"/><rect x="3249.1" y="1242.6" width="3.2" height="3.9" fill="#7b63b9"/><rect x="3213.4" y="1178.6" width="6.1" height="4.0" fill="#8790d8"/><rect x="3210.1" y="1240.6" width="6.8" height="3.1" fill="#8790d8"/><rect x="3214.7" y="1307.1" width="4.6" height="4.2" fill="#5f7bcb"/><rect x="3263.9" y="1196.5" width="3.2" height="2.4" fill="#5f7bcb"/><rect x="3167.6" y="1275.4" width="4.5" height="3.3" fill="#8790d8"/><rect x="3204.1" y="1201.6" width="3.7" height="2.2" fill="#5f7bcb"/><rect x="3224.1" y="1304.6" width="6.9" height="2.5" fill="#8790d8"/><rect x="3272.9" y="1182.7" width="6.7" height="2.8" fill="#9ba2e2"/><rect x="3285.4" y="1237.8" width="6.6" height="3.6" fill="#8790d8"/><rect x="3245.2" y="1312.9" width="5.5" height="3.5" fill="#8790d8"/><rect x="3271.8" y="1205.0" width="3.9" height="3.0" fill="#9ba2e2"/><rect x="3177.1" y="1233.2" width="3.6" height="4.4" fill="#8790d8"/><rect x="3160.9" y="1265.8" width="6.0" height="2.1" fill="#7b63b9"/><rect x="3171.7" y="1271.7" width="5.2" height="3.6" fill="#7b63b9"/><rect x="3246.4" y="1225.1" width="4.0" height="3.0" fill="#7b63b9"/><rect x="3218.0" y="1245.9" width="3.1" height="3.5" fill="#5f7bcb"/><rect x="3220.6" y="1247.3" width="5.5" height="4.0" fill="#8790d8"/><rect x="3269.1" y="1239.8" width="3.3" height="2.9" fill="#7b63b9"/><rect x="3168.0" y="1246.5" width="5.0" height="2.1" fill="#8790d8"/><rect x="3166.7" y="1293.2" width="6.1" height="3.3" fill="#565cb0"/><rect x="3260.9" y="1319.1" width="5.6" height="4.0" fill="#565cb0"/><rect x="3275.7" y="1335.3" width="5.9" height="4.0" fill="#8790d8"/><rect x="3173.6" y="1317.6" width="4.2" height="4.0" fill="#8790d8"/><rect x="3251.6" y="1291.2" width="3.9" height="4.1" fill="#9ba2e2"/><rect x="3261.5" y="1201.1" width="6.6" height="2.7" fill="#5f7bcb"/><rect x="3175.3" y="1256.2" width="6.7" height="2.5" fill="#7b63b9"/><rect x="3241.8" y="1213.7" width="4.5" height="2.5" fill="#5f7bcb"/><rect x="3177.8" y="1325.7" width="5.7" height="4.2" fill="#8790d8"/><rect x="3266.6" y="1218.0" width="6.1" height="2.1" fill="#7b63b9"/><rect x="3291.0" y="1248.3" width="5.1" height="3.7" fill="#565cb0"/><rect x="3190.6" y="1261.5" width="6.4" height="3.8" fill="#7b63b9"/><rect x="3192.4" y="1334.4" width="5.3" height="2.9" fill="#565cb0"/><rect x="3217.3" y="1204.0" width="6.0" height="2.1" fill="#9ba2e2"/><rect x="3190.8" y="1278.1" width="6.9" height="3.5" fill="#7b63b9"/><rect x="3258.2" y="1295.4" width="3.9" height="2.7" fill="#5f7bcb"/><rect x="3213.9" y="1234.0" width="3.2" height="3.2" fill="#9ba2e2"/><rect x="3247.0" y="1179.3" width="3.0" height="2.9" fill="#565cb0"/><rect x="3228.7" y="1261.3" width="4.7" height="2.8" fill="#8790d8"/><rect x="3183.8" y="1275.7" width="4.9" height="2.3" fill="#8790d8"/><rect x="3254.6" y="1247.9" width="3.3" height="2.4" fill="#7b63b9"/><rect x="3211.7" y="1218.0" width="3.0" height="3.6" fill="#9ba2e2"/><rect x="3280.7" y="1271.0" width="5.3" height="3.5" fill="#9ba2e2"/><rect x="3258.3" y="1215.5" width="6.6" height="2.1" fill="#9ba2e2"/><rect x="3158.6" y="1205.4" width="3.6" height="4.3" fill="#565cb0"/><rect x="3156.8" y="1264.0" width="6.8" height="2.4" fill="#8790d8"/><rect x="3228.0" y="1278.7" width="5.6" height="3.0" fill="#9ba2e2"/><rect x="3179.7" y="1225.3" width="4.2" height="2.1" fill="#5f7bcb"/><rect x="3255.8" y="1176.7" width="6.4" height="3.9" fill="#5f7bcb"/><rect x="3166.4" y="1280.7" width="3.7" height="4.5" fill="#7b63b9"/><rect x="3187.8" y="1181.9" width="4.3" height="3.9" fill="#7b63b9"/><rect x="3255.2" y="1218.3" width="5.2" height="3.1" fill="#9ba2e2"/><rect x="3291.8" y="1223.1" width="6.7" height="4.2" fill="#565cb0"/><rect x="3278.9" y="1178.1" width="4.0" height="2.6" fill="#8790d8"/><rect x="3288.0" y="1295.2" width="4.3" height="4.2" fill="#7b63b9"/><rect x="3239.7" y="1236.5" width="6.4" height="4.3" fill="#9ba2e2"/><rect x="3221.2" y="1310.2" width="5.8" height="4.1" fill="#5f7bcb"/><rect x="3289.6" y="1213.2" width="6.5" height="4.0" fill="#5f7bcb"/><rect x="3242.7" y="1188.2" width="6.6" height="2.4" fill="#565cb0"/><rect x="3170.8" y="1275.3" width="3.6" height="4.4" fill="#565cb0"/><rect x="3159.4" y="1197.9" width="5.6" height="2.1" fill="#565cb0"/><rect x="3258.8" y="1186.2" width="5.4" height="2.9" fill="#9ba2e2"/><rect x="3280.5" y="1186.3" width="6.5" height="4.3" fill="#5f7bcb"/><rect x="3170.2" y="1208.7" width="3.4" height="2.1" fill="#565cb0"/><rect x="3271.2" y="1276.9" width="4.1" height="2.2" fill="#565cb0"/><rect x="3266.5" y="1279.2" width="4.2" height="2.8" fill="#7b63b9"/><rect x="3158.0" y="1216.8" width="4.1" height="3.8" fill="#7b63b9"/><rect x="3283.2" y="1298.9" width="5.4" height="3.2" fill="#7b63b9"/><rect x="3242.1" y="1180.7" width="4.7" height="3.1" fill="#565cb0"/><rect x="3203.9" y="1288.6" width="5.2" height="2.5" fill="#565cb0"/><rect x="3235.9" y="1221.7" width="4.7" height="3.3" fill="#7b63b9"/><rect x="3262.3" y="1332.4" width="3.0" height="3.2" fill="#5f7bcb"/><rect x="3252.9" y="1307.9" width="6.9" height="3.5" fill="#9ba2e2"/><rect x="3191.8" y="1326.9" width="4.1" height="2.5" fill="#8790d8"/><rect x="3225.2" y="1193.3" width="5.5" height="2.2" fill="#9ba2e2"/><rect x="3265.8" y="1276.3" width="4.4" height="3.0" fill="#5f7bcb"/><rect x="3280.6" y="1295.1" width="4.7" height="3.6" fill="#7b63b9"/><rect x="3184.1" y="1217.9" width="6.6" height="3.3" fill="#5f7bcb"/><rect x="3293.3" y="1276.7" width="6.8" height="2.3" fill="#9ba2e2"/><rect x="3261.3" y="1296.3" width="5.6" height="2.9" fill="#7b63b9"/><rect x="3228.5" y="1314.8" width="4.8" height="3.4" fill="#7b63b9"/><rect x="3179.0" y="1246.0" width="6.1" height="3.4" fill="#8790d8"/><rect x="3202.1" y="1278.7" width="5.8" height="3.3" fill="#7b63b9"/><rect x="3197.5" y="1288.3" width="6.4" height="2.4" fill="#8790d8"/><rect x="3292.2" y="1291.6" width="5.4" height="2.9" fill="#8790d8"/><rect x="3201.3" y="1206.0" width="6.9" height="3.8" fill="#565cb0"/><rect x="3178.3" y="1281.1" width="3.8" height="2.4" fill="#8790d8"/><rect x="3266.9" y="1293.2" width="4.7" height="2.5" fill="#565cb0"/><rect x="3194.6" y="1317.5" width="4.9" height="2.0" fill="#5f7bcb"/><rect x="3252.7" y="1255.9" width="5.5" height="3.2" fill="#8790d8"/><rect x="3191.3" y="1294.0" width="3.0" height="2.6" fill="#5f7bcb"/><rect x="3253.8" y="1269.8" width="5.6" height="4.1" fill="#9ba2e2"/><rect x="3275.0" y="1284.6" width="5.6" height="3.1" fill="#7b63b9"/><rect x="3191.7" y="1287.9" width="6.6" height="2.6" fill="#5f7bcb"/><rect x="3255.4" y="1276.6" width="4.0" height="3.1" fill="#5f7bcb"/><rect x="3157.9" y="1313.2" width="5.1" height="3.7" fill="#8790d8"/><rect x="3281.0" y="1228.3" width="3.0" height="4.1" fill="#565cb0"/><rect x="3160.5" y="1262.7" width="3.6" height="4.0" fill="#8790d8"/><rect x="3228.2" y="1191.9" width="5.3" height="3.4" fill="#5f7bcb"/><rect x="3227.2" y="1278.1" width="6.3" height="3.3" fill="#5f7bcb"/><rect x="3259.5" y="1248.9" width="7.0" height="2.5" fill="#9ba2e2"/><rect x="3262.4" y="1195.3" width="6.9" height="2.9" fill="#565cb0"/><rect x="3190.6" y="1236.9" width="3.2" height="2.2" fill="#5f7bcb"/><rect x="3243.5" y="1283.8" width="5.3" height="2.3" fill="#7b63b9"/><rect x="3259.4" y="1326.3" width="5.1" height="2.5" fill="#5f7bcb"/><rect x="3220.1" y="1202.1" width="6.7" height="2.2" fill="#8790d8"/><rect x="3221.1" y="1265.7" width="3.9" height="4.4" fill="#7b63b9"/><rect x="3248.8" y="1308.8" width="6.2" height="3.0" fill="#7b63b9"/><rect x="3262.0" y="1279.8" width="6.1" height="3.2" fill="#8790d8"/><rect x="3192.7" y="1236.0" width="4.0" height="3.1" fill="#8790d8"/><rect x="3222.9" y="1304.7" width="6.2" height="2.9" fill="#7b63b9"/><rect x="3200.2" y="1253.4" width="5.5" height="2.2" fill="#7b63b9"/><rect x="3176.6" y="1224.3" width="4.5" height="2.2" fill="#9ba2e2"/><rect x="3282.5" y="1301.3" width="3.6" height="4.1" fill="#9ba2e2"/><rect x="3157.2" y="1177.5" width="6.8" height="3.6" fill="#7b63b9"/><rect x="3240.7" y="1268.4" width="6.4" height="2.5" fill="#5f7bcb"/><rect x="3203.8" y="1200.2" width="6.6" height="4.0" fill="#8790d8"/><rect x="3240.9" y="1285.9" width="6.9" height="2.2" fill="#9ba2e2"/><rect x="3266.0" y="1310.1" width="3.8" height="3.7" fill="#9ba2e2"/><rect x="3166.2" y="1310.2" width="5.7" height="2.3" fill="#565cb0"/><rect x="3192.3" y="1213.2" width="3.6" height="3.2" fill="#565cb0"/><rect x="3223.3" y="1320.8" width="5.8" height="2.6" fill="#8790d8"/><rect x="3231.0" y="1313.9" width="3.0" height="4.1" fill="#5f7bcb"/><rect x="3253.0" y="1255.4" width="4.2" height="3.2" fill="#5f7bcb"/><rect x="3214.0" y="1329.6" width="3.3" height="3.6" fill="#565cb0"/><rect x="3158.0" y="1183.0" width="5.9" height="4.5" fill="#565cb0"/><rect x="3226.9" y="1253.3" width="6.6" height="2.1" fill="#5f7bcb"/><rect x="3243.1" y="1229.9" width="6.4" height="2.9" fill="#5f7bcb"/><rect x="3264.6" y="1264.5" width="6.6" height="2.7" fill="#7b63b9"/><rect x="3214.5" y="1264.5" width="6.3" height="2.7" fill="#5f7bcb"/><rect x="3211.9" y="1256.4" width="4.1" height="3.3" fill="#8790d8"/><rect x="3247.2" y="1302.6" width="4.3" height="2.8" fill="#7b63b9"/><rect x="3173.0" y="1331.5" width="3.4" height="4.5" fill="#5f7bcb"/><rect x="3256.8" y="1317.6" width="5.2" height="2.1" fill="#7b63b9"/><rect x="3170.4" y="1183.1" width="6.3" height="3.2" fill="#565cb0"/><rect x="3266.1" y="1321.5" width="5.4" height="3.5" fill="#9ba2e2"/><rect x="3278.4" y="1189.0" width="3.2" height="3.6" fill="#8790d8"/><rect x="3169.4" y="1204.7" width="3.1" height="3.9" fill="#565cb0"/><rect x="3207.0" y="1307.5" width="6.1" height="3.4" fill="#7b63b9"/><rect x="3276.4" y="1205.3" width="3.1" height="2.1" fill="#9ba2e2"/><rect x="3245.4" y="1325.3" width="3.2" height="3.4" fill="#565cb0"/><rect x="3271.1" y="1299.7" width="4.7" height="3.7" fill="#5f7bcb"/><rect x="3217.9" y="1178.0" width="4.5" height="3.5" fill="#8790d8"/><rect x="3222.0" y="1241.8" width="3.4" height="3.6" fill="#8790d8"/><rect x="3281.1" y="1276.1" width="4.7" height="2.0" fill="#565cb0"/><rect x="3293.9" y="1313.2" width="3.9" height="2.3" fill="#5f7bcb"/><rect x="3157.6" y="1290.9" width="4.0" height="3.8" fill="#8790d8"/><rect x="3284.9" y="1234.3" width="6.0" height="3.7" fill="#8790d8"/><rect x="3257.8" y="1189.2" width="5.5" height="3.8" fill="#5f7bcb"/><rect x="3249.3" y="1318.3" width="6.7" height="2.1" fill="#565cb0"/><rect x="3156.7" y="1178.1" width="5.6" height="4.0" fill="#565cb0"/><rect x="3209.8" y="1225.8" width="5.4" height="4.4" fill="#5f7bcb"/><rect x="3240.8" y="1226.4" width="6.8" height="3.8" fill="#5f7bcb"/><rect x="3250.3" y="1198.9" width="6.2" height="2.9" fill="#8790d8"/><rect x="3243.7" y="1242.7" width="4.5" height="4.0" fill="#7b63b9"/><rect x="3265.5" y="1266.5" width="4.2" height="2.2" fill="#9ba2e2"/><rect x="3201.8" y="1272.8" width="6.9" height="4.1" fill="#9ba2e2"/><rect x="3272.3" y="1269.4" width="6.9" height="2.6" fill="#5f7bcb"/><rect x="3251.5" y="1272.1" width="6.6" height="4.0" fill="#7b63b9"/><rect x="3252.0" y="1227.2" width="4.1" height="2.4" fill="#565cb0"/><rect x="3195.7" y="1198.2" width="6.6" height="4.5" fill="#8790d8"/><rect x="3193.6" y="1312.1" width="6.2" height="3.7" fill="#5f7bcb"/><rect x="3203.9" y="1189.3" width="5.2" height="4.0" fill="#8790d8"/><rect x="3265.9" y="1291.4" width="6.9" height="2.8" fill="#565cb0"/><rect x="3250.4" y="1250.2" width="3.8" height="2.6" fill="#565cb0"/><rect x="3266.5" y="1249.3" width="3.4" height="4.0" fill="#565cb0"/><rect x="3187.9" y="1268.6" width="6.6" height="4.2" fill="#9ba2e2"/><rect x="3200.3" y="1256.8" width="3.8" height="2.5" fill="#565cb0"/><rect x="3180.5" y="1288.0" width="4.5" height="3.4" fill="#5f7bcb"/><rect x="3264.8" y="1313.0" width="4.0" height="4.3" fill="#5f7bcb"/><rect x="3207.7" y="1192.7" width="5.5" height="4.0" fill="#8790d8"/><rect x="3199.5" y="1180.6" width="4.1" height="3.5" fill="#565cb0"/><rect x="3159.8" y="1334.4" width="6.5" height="3.2" fill="#9ba2e2"/><rect x="3185.2" y="1324.0" width="4.1" height="2.2" fill="#5f7bcb"/><rect x="3263.1" y="1306.9" width="6.9" height="2.6" fill="#565cb0"/><rect x="3202.8" y="1335.0" width="4.5" height="2.1" fill="#565cb0"/><rect x="3233.5" y="1315.2" width="4.8" height="4.4" fill="#565cb0"/><rect x="3276.5" y="1278.2" width="6.7" height="3.8" fill="#565cb0"/><rect x="3191.3" y="1266.1" width="5.6" height="4.4" fill="#9ba2e2"/><rect x="3210.4" y="1247.5" width="3.6" height="4.4" fill="#8790d8"/><rect x="3179.3" y="1326.6" width="6.8" height="2.1" fill="#9ba2e2"/><rect x="3282.4" y="1309.8" width="3.2" height="4.0" fill="#5f7bcb"/><rect x="3162.9" y="1198.9" width="6.0" height="4.3" fill="#7b63b9"/><rect x="3238.1" y="1246.4" width="5.6" height="3.2" fill="#7b63b9"/><rect x="3191.3" y="1195.6" width="4.9" height="2.4" fill="#8790d8"/><rect x="3268.7" y="1322.2" width="6.6" height="3.2" fill="#8790d8"/><rect x="3267.5" y="1200.8" width="6.3" height="2.2" fill="#9ba2e2"/><rect x="3277.1" y="1318.1" width="3.6" height="3.1" fill="#565cb0"/><rect x="3285.4" y="1237.4" width="3.1" height="2.2" fill="#7b63b9"/><rect x="3200.5" y="1213.2" width="3.5" height="2.9" fill="#7b63b9"/><rect x="3186.3" y="1184.8" width="5.9" height="3.4" fill="#8790d8"/><rect x="3216.9" y="1199.6" width="4.7" height="2.6" fill="#565cb0"/><rect x="3193.2" y="1310.2" width="4.3" height="2.4" fill="#5f7bcb"/><rect x="3170.5" y="1248.8" width="4.9" height="2.4" fill="#9ba2e2"/><rect x="3163.1" y="1319.1" width="5.7" height="2.5" fill="#5f7bcb"/><rect x="3272.6" y="1194.8" width="6.0" height="4.4" fill="#5f7bcb"/><rect x="3294.5" y="1335.6" width="6.7" height="2.2" fill="#7b63b9"/><rect x="3213.6" y="1201.7" width="6.3" height="4.4" fill="#8790d8"/><rect x="3292.8" y="1178.3" width="6.2" height="2.9" fill="#8790d8"/><rect x="3217.4" y="1302.2" width="6.8" height="2.7" fill="#7b63b9"/><rect x="3216.3" y="1321.8" width="3.9" height="3.4" fill="#8790d8"/><rect x="3273.8" y="1259.3" width="3.9" height="2.4" fill="#9ba2e2"/><rect x="3166.3" y="1189.7" width="5.4" height="3.2" fill="#7b63b9"/><rect x="3179.8" y="1197.7" width="5.7" height="3.6" fill="#8790d8"/><rect x="3237.1" y="1208.1" width="3.3" height="3.8" fill="#5f7bcb"/><rect x="3273.4" y="1322.5" width="5.1" height="2.9" fill="#7b63b9"/><rect x="3273.6" y="1314.2" width="5.0" height="2.0" fill="#5f7bcb"/><rect x="3173.9" y="1282.3" width="4.0" height="3.4" fill="#7b63b9"/><rect x="3160.3" y="1288.2" width="5.3" height="4.1" fill="#7b63b9"/><rect x="3228.2" y="1247.1" width="5.1" height="2.3" fill="#8790d8"/><rect x="3270.0" y="1314.3" width="4.3" height="3.8" fill="#5f7bcb"/><rect x="3236.2" y="1319.6" width="4.2" height="2.3" fill="#5f7bcb"/><rect x="3217.9" y="1179.8" width="6.2" height="2.3" fill="#8790d8"/><rect x="3291.2" y="1211.5" width="3.7" height="2.3" fill="#7b63b9"/><rect x="3233.2" y="1328.7" width="3.1" height="4.3" fill="#8790d8"/><rect x="3191.9" y="1309.8" width="5.5" height="3.2" fill="#8790d8"/><rect x="3254.0" y="1192.2" width="6.5" height="3.8" fill="#565cb0"/><rect x="3193.5" y="1250.2" width="5.3" height="3.9" fill="#565cb0"/><rect x="3172.3" y="1240.7" width="3.5" height="3.5" fill="#8790d8"/><rect x="3175.8" y="1267.5" width="6.0" height="2.4" fill="#565cb0"/><rect x="3287.0" y="1238.0" width="4.7" height="4.1" fill="#9ba2e2"/><rect x="3160.2" y="1331.2" width="3.2" height="2.9" fill="#5f7bcb"/><rect x="3188.9" y="1229.4" width="4.7" height="4.5" fill="#7b63b9"/><rect x="3269.8" y="1311.5" width="3.2" height="3.3" fill="#7b63b9"/><rect x="3190.2" y="1243.3" width="5.5" height="2.9" fill="#9ba2e2"/><rect x="3181.5" y="1227.7" width="3.8" height="3.7" fill="#8790d8"/><rect x="3174.7" y="1331.0" width="6.1" height="4.3" fill="#565cb0"/><rect x="3269.0" y="1317.4" width="6.5" height="2.1" fill="#9ba2e2"/><rect x="3192.5" y="1284.4" width="4.1" height="3.4" fill="#565cb0"/><rect x="3242.5" y="1215.8" width="5.1" height="3.1" fill="#565cb0"/><rect x="3195.6" y="1224.6" width="5.6" height="2.3" fill="#9ba2e2"/><rect x="3290.0" y="1323.3" width="6.6" height="2.2" fill="#9ba2e2"/><rect x="3230.2" y="1199.5" width="3.5" height="2.3" fill="#7b63b9"/><rect x="3283.9" y="1268.2" width="4.1" height="3.8" fill="#9ba2e2"/><rect x="3195.5" y="1248.5" width="5.8" height="2.6" fill="#5f7bcb"/><rect x="3183.4" y="1289.5" width="4.8" height="3.4" fill="#9ba2e2"/><rect x="3222.3" y="1306.9" width="3.1" height="2.8" fill="#8790d8"/><rect x="3227.2" y="1237.1" width="5.3" height="2.0" fill="#7b63b9"/><rect x="3177.9" y="1328.2" width="4.3" height="2.8" fill="#7b63b9"/><rect x="3195.2" y="1333.9" width="4.2" height="3.9" fill="#8790d8"/><rect x="3232.6" y="1272.8" width="4.4" height="3.6" fill="#9ba2e2"/><rect x="3209.7" y="1246.2" width="5.9" height="2.3" fill="#8790d8"/><rect x="3294.3" y="1284.3" width="6.7" height="3.0" fill="#7b63b9"/><rect x="3174.8" y="1208.1" width="5.4" height="2.7" fill="#9ba2e2"/><rect x="3168.5" y="1312.9" width="6.7" height="4.5" fill="#7b63b9"/><rect x="3265.5" y="1289.2" width="6.7" height="2.3" fill="#565cb0"/><rect x="3155.7" y="1298.4" width="5.3" height="3.2" fill="#9ba2e2"/><rect x="3176.2" y="1311.9" width="4.1" height="3.6" fill="#565cb0"/><rect x="3208.5" y="1248.2" width="4.8" height="3.8" fill="#7b63b9"/><rect x="3204.8" y="1260.0" width="5.4" height="3.6" fill="#565cb0"/><rect x="3265.8" y="1311.8" width="5.0" height="3.1" fill="#8790d8"/><rect x="3230.6" y="1304.3" width="4.7" height="2.9" fill="#8790d8"/><rect x="3167.5" y="1323.1" width="4.3" height="4.1" fill="#8790d8"/><rect x="3290.0" y="1208.4" width="4.7" height="4.3" fill="#565cb0"/><rect x="3158.7" y="1216.8" width="6.6" height="2.7" fill="#9ba2e2"/><rect x="3263.9" y="1262.0" width="7.0" height="3.3" fill="#9ba2e2"/><rect x="3257.4" y="1244.6" width="4.9" height="2.1" fill="#7b63b9"/><rect x="3218.8" y="1177.4" width="3.3" height="2.6" fill="#5f7bcb"/><rect x="3207.8" y="1239.9" width="5.2" height="3.4" fill="#8790d8"/><rect x="3290.8" y="1253.7" width="4.8" height="3.6" fill="#9ba2e2"/><rect x="3203.4" y="1260.6" width="6.3" height="2.4" fill="#7b63b9"/><rect x="3206.7" y="1187.7" width="4.2" height="2.4" fill="#7b63b9"/><rect x="3252.2" y="1307.2" width="7.0" height="4.2" fill="#5f7bcb"/><rect x="3243.9" y="1259.7" width="6.3" height="2.5" fill="#8790d8"/><rect x="3213.1" y="1185.3" width="5.3" height="2.3" fill="#9ba2e2"/><rect x="3294.9" y="1277.7" width="3.2" height="3.0" fill="#565cb0"/><rect x="3198.3" y="1286.3" width="3.0" height="2.8" fill="#565cb0"/><rect x="3237.6" y="1282.7" width="3.8" height="3.2" fill="#9ba2e2"/><rect x="3234.9" y="1315.3" width="6.6" height="3.3" fill="#8790d8"/><rect x="3235.9" y="1241.6" width="3.5" height="2.4" fill="#9ba2e2"/><rect x="3170.1" y="1191.7" width="3.7" height="3.3" fill="#5f7bcb"/><rect x="3241.3" y="1304.9" width="3.2" height="2.0" fill="#9ba2e2"/><rect x="3200.5" y="1290.3" width="4.4" height="2.4" fill="#7b63b9"/><rect x="3243.6" y="1313.4" width="6.8" height="2.2" fill="#8790d8"/><rect x="3218.4" y="1237.5" width="3.2" height="4.2" fill="#9ba2e2"/><rect x="3262.6" y="1182.7" width="3.2" height="2.6" fill="#8790d8"/><rect x="3161.3" y="1324.8" width="6.4" height="2.8" fill="#5f7bcb"/><rect x="3197.8" y="1272.2" width="6.8" height="3.2" fill="#565cb0"/><rect x="3189.3" y="1238.1" width="5.9" height="2.6" fill="#7b63b9"/><rect x="3211.2" y="1289.7" width="3.1" height="4.2" fill="#565cb0"/><rect x="3179.5" y="1233.1" width="3.7" height="4.4" fill="#7b63b9"/><rect x="3210.8" y="1233.8" width="4.3" height="4.2" fill="#7b63b9"/><rect x="3211.8" y="1186.2" width="3.5" height="4.1" fill="#7b63b9"/><rect x="3233.0" y="1237.8" width="4.9" height="2.9" fill="#5f7bcb"/><rect x="3160.0" y="1282.1" width="4.4" height="2.4" fill="#8790d8"/><rect x="3168.1" y="1218.9" width="6.3" height="2.3" fill="#5f7bcb"/><rect x="3220.8" y="1303.0" width="4.0" height="2.9" fill="#8790d8"/><rect x="3256.8" y="1236.1" width="6.8" height="2.5" fill="#5f7bcb"/><rect x="3226.1" y="1212.1" width="4.8" height="2.3" fill="#7b63b9"/><rect x="3239.0" y="1246.2" width="7.0" height="3.3" fill="#5f7bcb"/><rect x="3240.7" y="1209.7" width="6.5" height="2.3" fill="#9ba2e2"/><rect x="3168.0" y="1312.2" width="5.9" height="3.9" fill="#565cb0"/><rect x="3247.6" y="1266.6" width="4.2" height="3.0" fill="#565cb0"/><rect x="3252.8" y="1300.0" width="3.9" height="2.5" fill="#565cb0"/><rect x="3164.7" y="1322.1" width="6.2" height="3.9" fill="#8790d8"/><rect x="3164.4" y="1225.6" width="3.9" height="2.3" fill="#5f7bcb"/><rect x="3194.8" y="1240.3" width="6.6" height="3.9" fill="#8790d8"/><rect x="3286.9" y="1204.0" width="4.5" height="4.0" fill="#7b63b9"/><rect x="3281.3" y="1179.7" width="5.8" height="3.2" fill="#5f7bcb"/><rect x="3204.6" y="1276.4" width="3.7" height="2.3" fill="#9ba2e2"/><rect x="3258.4" y="1289.9" width="3.2" height="2.1" fill="#8790d8"/><rect x="3215.7" y="1297.0" width="3.6" height="3.8" fill="#9ba2e2"/><rect x="3198.8" y="1278.0" width="3.7" height="4.1" fill="#9ba2e2"/><rect x="3225.2" y="1259.1" width="6.7" height="3.7" fill="#9ba2e2"/><rect x="3204.2" y="1175.9" width="6.3" height="3.9" fill="#7b63b9"/><rect x="3281.9" y="1315.9" width="5.3" height="3.7" fill="#8790d8"/><rect x="3250.9" y="1181.6" width="4.3" height="3.9" fill="#7b63b9"/><rect x="3260.6" y="1189.5" width="5.8" height="3.0" fill="#9ba2e2"/><rect x="3271.7" y="1220.7" width="3.4" height="4.4" fill="#5f7bcb"/><rect x="3217.4" y="1230.2" width="5.0" height="3.7" fill="#5f7bcb"/><rect x="3226.7" y="1284.1" width="3.8" height="3.7" fill="#8790d8"/><rect x="3224.0" y="1206.0" width="6.8" height="4.1" fill="#9ba2e2"/><rect x="3191.9" y="1263.2" width="6.9" height="3.6" fill="#9ba2e2"/><rect x="3191.7" y="1330.1" width="3.7" height="2.9" fill="#565cb0"/><rect x="3183.4" y="1225.5" width="3.5" height="3.8" fill="#5f7bcb"/><rect x="3188.6" y="1214.4" width="5.1" height="3.1" fill="#7b63b9"/><rect x="3253.3" y="1197.1" width="5.8" height="3.5" fill="#8790d8"/><rect x="3202.0" y="1306.3" width="5.2" height="3.9" fill="#8790d8"/><rect x="3250.4" y="1200.5" width="6.9" height="4.1" fill="#5f7bcb"/><rect x="3272.0" y="1194.0" width="4.2" height="2.9" fill="#8790d8"/><rect x="3161.2" y="1319.2" width="4.2" height="2.3" fill="#7b63b9"/><rect x="3218.1" y="1193.8" width="4.3" height="3.2" fill="#7b63b9"/><rect x="3195.8" y="1265.0" width="3.2" height="3.2" fill="#5f7bcb"/><rect x="3166.9" y="1290.6" width="6.9" height="3.4" fill="#565cb0"/><rect x="3245.9" y="1329.0" width="5.0" height="4.0" fill="#7b63b9"/><rect x="3156.3" y="1323.0" width="5.6" height="3.6" fill="#7b63b9"/><rect x="3247.0" y="1188.2" width="6.0" height="2.1" fill="#5f7bcb"/><rect x="3273.2" y="1223.2" width="3.7" height="3.6" fill="#8790d8"/><rect x="3169.5" y="1290.9" width="4.2" height="3.5" fill="#5f7bcb"/><rect x="3181.1" y="1307.9" width="4.3" height="2.9" fill="#9ba2e2"/><rect x="3284.5" y="1309.9" width="4.0" height="2.1" fill="#565cb0"/><rect x="3234.9" y="1276.3" width="6.3" height="3.8" fill="#565cb0"/><rect x="3288.1" y="1254.9" width="5.0" height="2.4" fill="#7b63b9"/><rect x="3239.9" y="1276.1" width="3.6" height="2.6" fill="#8790d8"/><rect x="3217.5" y="1331.1" width="3.4" height="2.1" fill="#5f7bcb"/><rect x="3222.6" y="1210.7" width="4.5" height="2.1" fill="#9ba2e2"/><rect x="3275.4" y="1301.8" width="4.7" height="2.7" fill="#565cb0"/><rect x="3227.5" y="1243.2" width="4.4" height="3.1" fill="#8790d8"/><rect x="3282.3" y="1202.0" width="4.2" height="3.1" fill="#9ba2e2"/><rect x="3250.1" y="1266.6" width="4.9" height="3.4" fill="#9ba2e2"/><rect x="3219.9" y="1331.3" width="6.6" height="4.2" fill="#5f7bcb"/><rect x="3290.4" y="1275.0" width="6.2" height="2.2" fill="#7b63b9"/><rect x="3240.8" y="1223.3" width="5.3" height="4.4" fill="#5f7bcb"/><rect x="3247.5" y="1197.6" width="6.5" height="3.3" fill="#565cb0"/><rect x="3274.4" y="1211.3" width="6.0" height="3.7" fill="#8790d8"/><rect x="3248.0" y="1235.3" width="5.3" height="3.0" fill="#9ba2e2"/><rect x="3188.9" y="1246.4" width="4.0" height="2.6" fill="#8790d8"/><rect x="3232.2" y="1193.7" width="6.4" height="2.6" fill="#565cb0"/><rect x="3181.5" y="1283.1" width="5.8" height="2.6" fill="#5f7bcb"/><rect x="3187.0" y="1267.4" width="3.5" height="3.3" fill="#9ba2e2"/><rect x="3234.9" y="1312.1" width="5.7" height="4.0" fill="#8790d8"/><rect x="3276.6" y="1263.9" width="5.9" height="3.9" fill="#565cb0"/><rect x="3243.3" y="1329.6" width="5.1" height="3.1" fill="#5f7bcb"/><rect x="3231.7" y="1330.8" width="3.8" height="3.2" fill="#565cb0"/><rect x="3174.3" y="1300.0" width="3.2" height="2.6" fill="#7b63b9"/><rect x="3161.0" y="1288.1" width="6.8" height="3.1" fill="#565cb0"/><rect x="3254.6" y="1243.9" width="6.6" height="3.6" fill="#8790d8"/><rect x="3234.3" y="1322.7" width="6.5" height="2.4" fill="#7b63b9"/><rect x="3268.2" y="1293.6" width="3.0" height="2.6" fill="#8790d8"/><rect x="3207.6" y="1293.8" width="6.8" height="3.8" fill="#565cb0"/><rect x="3270.0" y="1232.3" width="4.4" height="2.8" fill="#9ba2e2"/><rect x="3171.0" y="1323.9" width="5.7" height="2.6" fill="#8790d8"/><rect x="3252.7" y="1179.1" width="7.0" height="3.1" fill="#565cb0"/><rect x="3223.8" y="1187.5" width="4.0" height="2.4" fill="#7b63b9"/><rect x="3278.0" y="1283.0" width="6.3" height="3.5" fill="#7b63b9"/><rect x="3230.9" y="1286.2" width="6.2" height="4.4" fill="#565cb0"/><rect x="3158.6" y="1335.0" width="4.9" height="3.2" fill="#565cb0"/><rect x="3267.7" y="1181.4" width="3.7" height="4.0" fill="#9ba2e2"/><rect x="3210.3" y="1251.9" width="3.6" height="4.1" fill="#5f7bcb"/><rect x="3187.3" y="1329.2" width="5.1" height="2.9" fill="#9ba2e2"/><rect x="3185.5" y="1318.9" width="5.4" height="2.1" fill="#8790d8"/><rect x="3270.4" y="1292.2" width="4.3" height="3.2" fill="#7b63b9"/><rect x="3199.3" y="1229.4" width="4.9" height="2.6" fill="#8790d8"/><rect x="3219.7" y="1333.7" width="3.2" height="2.4" fill="#8790d8"/><rect x="3193.5" y="1219.5" width="5.0" height="2.7" fill="#9ba2e2"/><rect x="3235.8" y="1269.3" width="3.6" height="3.7" fill="#9ba2e2"/><rect x="3282.1" y="1191.0" width="3.8" height="3.1" fill="#9ba2e2"/><rect x="3244.4" y="1233.8" width="4.1" height="4.0" fill="#8790d8"/><rect x="3251.0" y="1224.4" width="6.1" height="3.8" fill="#9ba2e2"/><rect x="3275.1" y="1215.0" width="6.5" height="3.8" fill="#7b63b9"/><rect x="3163.6" y="1229.7" width="4.3" height="4.5" fill="#5f7bcb"/><rect x="3226.0" y="1319.0" width="6.2" height="4.5" fill="#8790d8"/><rect x="3174.2" y="1176.9" width="6.5" height="3.1" fill="#5f7bcb"/><rect x="3210.8" y="1299.4" width="6.7" height="3.5" fill="#8790d8"/><rect x="3197.5" y="1225.1" width="5.9" height="3.4" fill="#7b63b9"/><rect x="3165.4" y="1206.2" width="6.7" height="3.5" fill="#7b63b9"/><rect x="3236.8" y="1333.9" width="4.4" height="3.9" fill="#5f7bcb"/><rect x="3256.6" y="1323.4" width="6.4" height="2.8" fill="#8790d8"/><rect x="3193.9" y="1217.0" width="3.1" height="2.4" fill="#7b63b9"/><rect x="3188.4" y="1178.9" width="3.2" height="3.1" fill="#9ba2e2"/><rect x="3194.9" y="1256.1" width="3.4" height="2.6" fill="#565cb0"/><rect x="3290.6" y="1272.0" width="3.3" height="4.0" fill="#9ba2e2"/><rect x="3203.1" y="1197.6" width="3.8" height="3.3" fill="#565cb0"/><rect x="3245.1" y="1323.5" width="3.8" height="2.8" fill="#565cb0"/><rect x="3246.4" y="1240.6" width="5.7" height="2.8" fill="#565cb0"/><rect x="3276.6" y="1303.3" width="3.3" height="3.5" fill="#5f7bcb"/><rect x="3294.1" y="1239.7" width="6.8" height="4.2" fill="#565cb0"/><rect x="3285.3" y="1266.1" width="7.0" height="2.1" fill="#9ba2e2"/><rect x="3255.0" y="1309.5" width="3.6" height="2.0" fill="#8790d8"/><rect x="3175.2" y="1298.6" width="3.4" height="4.0" fill="#5f7bcb"/><rect x="3203.5" y="1284.7" width="6.5" height="2.4" fill="#9ba2e2"/><rect x="3236.0" y="1212.5" width="5.5" height="4.0" fill="#5f7bcb"/><rect x="3262.5" y="1300.0" width="4.2" height="3.9" fill="#5f7bcb"/><rect x="3233.8" y="1233.6" width="5.1" height="2.7" fill="#7b63b9"/><rect x="3156.4" y="1251.9" width="5.6" height="3.9" fill="#7b63b9"/><rect x="3176.3" y="1276.5" width="4.6" height="4.4" fill="#565cb0"/><rect x="3243.0" y="1195.3" width="5.2" height="2.5" fill="#8790d8"/><rect x="3191.6" y="1272.8" width="6.0" height="4.3" fill="#8790d8"/><rect x="3229.5" y="1231.9" width="5.8" height="3.1" fill="#5f7bcb"/><rect x="3185.1" y="1321.9" width="6.6" height="3.0" fill="#8790d8"/><rect x="3200.7" y="1320.4" width="3.4" height="3.8" fill="#565cb0"/><rect x="3268.6" y="1322.1" width="5.7" height="2.9" fill="#8790d8"/><rect x="3234.5" y="1241.4" width="6.7" height="4.4" fill="#8790d8"/><rect x="3159.4" y="1179.0" width="5.8" height="2.6" fill="#7b63b9"/><rect x="3183.7" y="1297.3" width="5.6" height="2.7" fill="#5f7bcb"/><rect x="3185.6" y="1266.9" width="3.6" height="4.2" fill="#7b63b9"/><rect x="3289.4" y="1197.6" width="4.2" height="2.2" fill="#565cb0"/><rect x="3223.4" y="1318.4" width="3.6" height="3.7" fill="#9ba2e2"/><rect x="3289.7" y="1209.7" width="3.2" height="4.0" fill="#7b63b9"/><rect x="3161.6" y="1299.7" width="4.8" height="3.1" fill="#8790d8"/><rect x="3295.1" y="1223.4" width="3.1" height="2.3" fill="#565cb0"/><rect x="3173.9" y="1224.2" width="5.0" height="2.9" fill="#8790d8"/><rect x="3220.5" y="1239.3" width="4.7" height="3.6" fill="#5f7bcb"/><rect x="3279.2" y="1332.6" width="3.1" height="2.6" fill="#565cb0"/><rect x="3160.4" y="1256.6" width="3.9" height="3.1" fill="#565cb0"/><rect x="3257.6" y="1183.4" width="6.6" height="2.2" fill="#565cb0"/><rect x="3172.0" y="1253.8" width="3.5" height="3.1" fill="#8790d8"/><rect x="3186.6" y="1262.3" width="5.5" height="3.4" fill="#565cb0"/><rect x="3229.7" y="1310.2" width="6.8" height="2.2" fill="#8790d8"/><rect x="3275.1" y="1331.4" width="3.9" height="2.2" fill="#8790d8"/><rect x="3157.2" y="1218.8" width="6.9" height="2.5" fill="#565cb0"/><rect x="3212.5" y="1264.9" width="4.5" height="2.0" fill="#565cb0"/><rect x="3247.0" y="1262.8" width="5.2" height="3.7" fill="#7b63b9"/><rect x="3211.3" y="1226.7" width="4.7" height="4.4" fill="#5f7bcb"/><rect x="3262.2" y="1316.9" width="6.2" height="4.2" fill="#565cb0"/><rect x="3188.7" y="1256.0" width="7.0" height="3.7" fill="#5f7bcb"/><rect x="3294.5" y="1308.0" width="5.7" height="2.2" fill="#9ba2e2"/><rect x="3265.4" y="1321.2" width="3.2" height="3.7" fill="#7b63b9"/><rect x="3251.5" y="1246.6" width="5.7" height="3.1" fill="#9ba2e2"/><rect x="3155.2" y="1295.2" width="6.4" height="3.3" fill="#9ba2e2"/><rect x="3231.9" y="1236.6" width="6.3" height="4.0" fill="#5f7bcb"/><rect x="3205.1" y="1186.0" width="6.9" height="2.7" fill="#7b63b9"/><rect x="3165.2" y="1303.4" width="5.7" height="4.3" fill="#7b63b9"/><rect x="3192.0" y="1310.4" width="6.4" height="2.9" fill="#9ba2e2"/><rect x="3222.2" y="1211.1" width="3.6" height="4.3" fill="#9ba2e2"/><rect x="3206.3" y="1208.5" width="3.7" height="2.9" fill="#8790d8"/><rect x="3176.6" y="1281.7" width="3.7" height="4.4" fill="#565cb0"/><rect x="3200.4" y="1233.7" width="6.5" height="3.1" fill="#5f7bcb"/><rect x="3176.7" y="1216.0" width="3.4" height="2.9" fill="#9ba2e2"/><rect x="3228.5" y="1248.2" width="3.4" height="3.0" fill="#5f7bcb"/><rect x="3252.9" y="1247.7" width="4.9" height="4.0" fill="#9ba2e2"/><rect x="3176.2" y="1284.7" width="4.5" height="3.3" fill="#8790d8"/><rect x="3242.7" y="1259.5" width="6.2" height="2.6" fill="#9ba2e2"/><rect x="3183.4" y="1267.1" width="3.2" height="2.4" fill="#9ba2e2"/><rect x="3193.7" y="1227.6" width="4.0" height="4.1" fill="#565cb0"/><rect x="3229.0" y="1254.7" width="3.4" height="2.3" fill="#7b63b9"/><rect x="3242.0" y="1235.2" width="3.2" height="3.1" fill="#7b63b9"/><rect x="3161.0" y="1296.3" width="6.9" height="3.1" fill="#9ba2e2"/><rect x="3269.2" y="1232.1" width="4.5" height="3.4" fill="#9ba2e2"/><rect x="3182.1" y="1331.3" width="5.8" height="2.9" fill="#8790d8"/><rect x="3201.5" y="1187.0" width="6.0" height="2.9" fill="#9ba2e2"/><rect x="3213.5" y="1325.6" width="5.6" height="4.0" fill="#565cb0"/><rect x="3238.5" y="1249.8" width="4.8" height="4.1" fill="#5f7bcb"/></g><path d="M3202.8,1188.9 L3243,1188.9 L3221.7,1219 Z" fill="#e8398c"/><path d="M3222.3,1220.3 L3222.3,1298.2" stroke="#e0408c" stroke-width="5"/><path d="M3158.8,1269.3 L3166,1266 L3168.9,1283.1 Z" fill="#e8589c"/><path d="M3702.9,1171.3 L3715.4,1171.3 L3733,1187.6 L3736.8,1191.4 L3726.7,1210.3 L3743.1,1220.3 L3765.7,1237.9 L3765.7,1248 L3749.3,1248 L3736.8,1245.4 L3738,1335.9 L3715.4,1340.9 L3707.9,1289.4 L3697.8,1335.9 L3680.3,1338.4 L3676.5,1248 L3665.2,1250.5 L3648.8,1255.5 L3646.3,1240.4 L3676.5,1219 L3690.3,1212.8 L3682.8,1197.7 L3692.8,1182.6 Z" fill="#4a5189" stroke="#4a5189" stroke-width="4" stroke-linejoin="round"/><defs><clipPath id="m2"><path d="M3702.9,1171.3 L3715.4,1171.3 L3733,1187.6 L3736.8,1191.4 L3726.7,1210.3 L3743.1,1220.3 L3765.7,1237.9 L3765.7,1248 L3749.3,1248 L3736.8,1245.4 L3738,1335.9 L3715.4,1340.9 L3707.9,1289.4 L3697.8,1335.9 L3680.3,1338.4 L3676.5,1248 L3665.2,1250.5 L3648.8,1255.5 L3646.3,1240.4 L3676.5,1219 L3690.3,1212.8 L3682.8,1197.7 L3692.8,1182.6 Z"/></clipPath></defs><g clip-path="url(#m2)" opacity="0.8"><rect x="3700.3" y="1266.2" width="6.7" height="3.2" fill="#5f68a4"/><rect x="3668.3" y="1258.1" width="5.5" height="4.0" fill="#353b6c"/><rect x="3699.6" y="1195.3" width="5.2" height="4.2" fill="#353b6c"/><rect x="3717.4" y="1238.5" width="4.8" height="3.8" fill="#5f68a4"/><rect x="3720.7" y="1312.4" width="3.3" height="2.1" fill="#5f68a4"/><rect x="3717.9" y="1303.3" width="4.3" height="3.5" fill="#5f68a4"/><rect x="3708.3" y="1279.9" width="5.0" height="3.7" fill="#6a74b0"/><rect x="3724.5" y="1240.3" width="5.2" height="4.3" fill="#353b6c"/><rect x="3730.8" y="1224.8" width="3.9" height="2.7" fill="#353b6c"/><rect x="3713.5" y="1189.6" width="3.4" height="2.7" fill="#353b6c"/><rect x="3760.7" y="1315.0" width="3.0" height="2.5" fill="#353b6c"/><rect x="3702.4" y="1337.6" width="4.6" height="2.2" fill="#5f68a4"/><rect x="3739.3" y="1217.1" width="3.3" height="2.8" fill="#6a74b0"/><rect x="3736.8" y="1191.3" width="4.0" height="2.3" fill="#353b6c"/><rect x="3701.8" y="1253.9" width="5.7" height="2.5" fill="#5f68a4"/><rect x="3763.9" y="1301.8" width="4.7" height="3.0" fill="#6a74b0"/><rect x="3696.5" y="1207.4" width="4.1" height="4.4" fill="#2e3460"/><rect x="3765.4" y="1174.6" width="3.7" height="4.5" fill="#353b6c"/><rect x="3651.3" y="1196.1" width="4.8" height="2.0" fill="#2e3460"/><rect x="3745.4" y="1236.8" width="3.3" height="2.5" fill="#5f68a4"/><rect x="3648.2" y="1233.8" width="5.5" height="2.3" fill="#6a74b0"/><rect x="3745.7" y="1194.3" width="4.5" height="3.6" fill="#2e3460"/><rect x="3754.8" y="1310.0" width="4.0" height="2.5" fill="#5f68a4"/><rect x="3728.3" y="1237.1" width="4.9" height="2.2" fill="#353b6c"/><rect x="3658.7" y="1177.9" width="6.9" height="2.6" fill="#6a74b0"/><rect x="3677.0" y="1311.0" width="5.4" height="2.7" fill="#5f68a4"/><rect x="3757.3" y="1337.0" width="3.5" height="3.2" fill="#353b6c"/><rect x="3679.8" y="1326.9" width="3.8" height="2.0" fill="#2e3460"/><rect x="3695.4" y="1213.5" width="3.2" height="2.7" fill="#5f68a4"/><rect x="3657.3" y="1194.8" width="4.8" height="2.8" fill="#5f68a4"/><rect x="3716.7" y="1327.9" width="4.9" height="2.9" fill="#2e3460"/><rect x="3761.3" y="1174.9" width="5.5" height="3.2" fill="#2e3460"/><rect x="3684.4" y="1340.8" width="3.3" height="3.4" fill="#353b6c"/><rect x="3753.8" y="1296.3" width="5.8" height="4.0" fill="#2e3460"/><rect x="3688.3" y="1287.5" width="6.6" height="4.2" fill="#6a74b0"/><rect x="3759.0" y="1176.4" width="5.0" height="2.0" fill="#6a74b0"/><rect x="3691.6" y="1173.4" width="3.3" height="2.2" fill="#353b6c"/><rect x="3764.9" y="1320.5" width="5.9" height="3.0" fill="#6a74b0"/><rect x="3698.9" y="1313.5" width="3.3" height="3.9" fill="#353b6c"/><rect x="3683.3" y="1186.2" width="3.1" height="4.4" fill="#353b6c"/><rect x="3705.7" y="1275.5" width="6.7" height="2.6" fill="#353b6c"/><rect x="3690.2" y="1195.6" width="5.4" height="3.3" fill="#2e3460"/><rect x="3725.1" y="1246.3" width="6.6" height="2.8" fill="#2e3460"/><rect x="3670.0" y="1244.4" width="6.2" height="4.3" fill="#5f68a4"/><rect x="3692.2" y="1270.2" width="4.3" height="2.3" fill="#6a74b0"/><rect x="3688.2" y="1323.2" width="3.2" height="2.2" fill="#2e3460"/><rect x="3744.4" y="1190.4" width="4.9" height="4.3" fill="#6a74b0"/><rect x="3692.0" y="1259.5" width="5.7" height="3.8" fill="#6a74b0"/><rect x="3684.5" y="1311.9" width="4.1" height="3.5" fill="#2e3460"/><rect x="3714.4" y="1223.7" width="6.2" height="2.0" fill="#5f68a4"/><rect x="3694.7" y="1203.5" width="6.1" height="2.7" fill="#5f68a4"/><rect x="3741.4" y="1338.2" width="3.5" height="2.3" fill="#2e3460"/><rect x="3760.7" y="1287.4" width="3.8" height="3.2" fill="#5f68a4"/><rect x="3731.6" y="1299.4" width="5.1" height="2.1" fill="#5f68a4"/><rect x="3678.8" y="1229.9" width="5.8" height="3.3" fill="#5f68a4"/><rect x="3693.3" y="1305.6" width="6.6" height="2.2" fill="#6a74b0"/><rect x="3661.8" y="1248.2" width="5.5" height="4.3" fill="#6a74b0"/><rect x="3712.0" y="1282.0" width="5.0" height="4.0" fill="#2e3460"/><rect x="3701.7" y="1281.8" width="3.8" height="3.8" fill="#353b6c"/><rect x="3671.8" y="1323.9" width="6.9" height="4.4" fill="#2e3460"/><rect x="3677.6" y="1293.1" width="3.1" height="3.3" fill="#353b6c"/><rect x="3698.9" y="1264.6" width="6.1" height="3.2" fill="#353b6c"/><rect x="3672.4" y="1318.4" width="4.7" height="2.1" fill="#2e3460"/><rect x="3728.3" y="1326.7" width="4.9" height="4.5" fill="#6a74b0"/><rect x="3759.2" y="1254.8" width="6.8" height="2.2" fill="#5f68a4"/><rect x="3698.8" y="1266.1" width="6.3" height="3.4" fill="#5f68a4"/><rect x="3708.7" y="1314.4" width="5.2" height="2.8" fill="#6a74b0"/><rect x="3760.3" y="1318.9" width="5.4" height="2.8" fill="#5f68a4"/><rect x="3761.9" y="1260.2" width="5.3" height="2.5" fill="#353b6c"/><rect x="3706.4" y="1273.9" width="3.1" height="4.4" fill="#6a74b0"/><rect x="3711.3" y="1339.1" width="3.5" height="2.2" fill="#5f68a4"/><rect x="3654.2" y="1262.7" width="4.7" height="4.4" fill="#6a74b0"/><rect x="3678.4" y="1251.5" width="3.5" height="3.1" fill="#6a74b0"/><rect x="3709.0" y="1189.7" width="4.7" height="2.1" fill="#2e3460"/><rect x="3661.8" y="1303.5" width="3.1" height="2.5" fill="#5f68a4"/><rect x="3647.7" y="1219.5" width="5.9" height="2.6" fill="#6a74b0"/><rect x="3658.8" y="1295.3" width="3.5" height="3.3" fill="#2e3460"/><rect x="3732.0" y="1290.3" width="6.5" height="2.1" fill="#6a74b0"/><rect x="3744.8" y="1275.7" width="5.2" height="4.2" fill="#5f68a4"/><rect x="3709.5" y="1315.7" width="5.4" height="4.1" fill="#5f68a4"/><rect x="3755.5" y="1277.8" width="4.4" height="2.5" fill="#2e3460"/><rect x="3752.6" y="1204.3" width="6.1" height="2.5" fill="#353b6c"/><rect x="3662.3" y="1211.9" width="5.9" height="2.6" fill="#353b6c"/><rect x="3698.2" y="1330.9" width="5.2" height="3.8" fill="#5f68a4"/><rect x="3694.4" y="1287.5" width="3.1" height="2.5" fill="#2e3460"/><rect x="3755.1" y="1335.5" width="3.5" height="3.3" fill="#2e3460"/><rect x="3706.3" y="1287.6" width="3.8" height="2.2" fill="#353b6c"/><rect x="3649.2" y="1300.5" width="5.5" height="4.3" fill="#6a74b0"/><rect x="3663.8" y="1202.6" width="3.8" height="4.1" fill="#2e3460"/><rect x="3757.0" y="1187.5" width="3.2" height="4.4" fill="#6a74b0"/><rect x="3655.6" y="1187.7" width="4.6" height="3.1" fill="#2e3460"/><rect x="3697.7" y="1273.2" width="3.1" height="3.8" fill="#5f68a4"/><rect x="3667.9" y="1248.3" width="6.0" height="3.0" fill="#5f68a4"/><rect x="3718.5" y="1187.4" width="6.2" height="2.8" fill="#353b6c"/><rect x="3742.0" y="1290.8" width="6.4" height="3.6" fill="#6a74b0"/><rect x="3714.3" y="1203.7" width="5.3" height="2.9" fill="#2e3460"/><rect x="3679.7" y="1191.0" width="6.0" height="2.4" fill="#6a74b0"/><rect x="3662.2" y="1227.3" width="5.2" height="2.9" fill="#6a74b0"/><rect x="3737.7" y="1240.1" width="5.9" height="2.2" fill="#2e3460"/><rect x="3682.3" y="1188.4" width="6.6" height="4.5" fill="#353b6c"/><rect x="3674.0" y="1331.5" width="5.7" height="2.8" fill="#6a74b0"/><rect x="3714.3" y="1261.7" width="4.6" height="4.5" fill="#5f68a4"/><rect x="3730.0" y="1300.5" width="6.9" height="2.1" fill="#353b6c"/><rect x="3734.5" y="1214.8" width="4.6" height="2.1" fill="#5f68a4"/><rect x="3723.7" y="1173.1" width="4.0" height="2.7" fill="#2e3460"/><rect x="3712.0" y="1257.4" width="6.9" height="3.4" fill="#353b6c"/><rect x="3722.5" y="1308.6" width="3.3" height="3.5" fill="#353b6c"/><rect x="3692.4" y="1330.5" width="4.5" height="4.4" fill="#6a74b0"/><rect x="3711.0" y="1272.5" width="4.7" height="3.2" fill="#2e3460"/><rect x="3709.2" y="1272.7" width="4.5" height="2.7" fill="#2e3460"/><rect x="3713.2" y="1219.4" width="5.9" height="2.7" fill="#353b6c"/><rect x="3738.5" y="1270.7" width="5.5" height="3.0" fill="#6a74b0"/><rect x="3652.6" y="1224.7" width="4.6" height="3.5" fill="#2e3460"/><rect x="3655.1" y="1324.9" width="4.7" height="3.2" fill="#5f68a4"/><rect x="3651.7" y="1188.0" width="6.2" height="4.3" fill="#5f68a4"/><rect x="3763.2" y="1309.8" width="5.4" height="2.3" fill="#6a74b0"/><rect x="3700.7" y="1205.8" width="3.2" height="3.3" fill="#353b6c"/><rect x="3689.7" y="1195.0" width="4.7" height="3.5" fill="#6a74b0"/><rect x="3689.8" y="1297.5" width="6.3" height="2.3" fill="#2e3460"/><rect x="3734.0" y="1211.7" width="3.5" height="4.2" fill="#2e3460"/><rect x="3679.1" y="1274.7" width="5.9" height="3.7" fill="#5f68a4"/><rect x="3721.9" y="1299.1" width="3.8" height="2.6" fill="#5f68a4"/><rect x="3751.2" y="1178.0" width="3.2" height="2.7" fill="#6a74b0"/><rect x="3649.5" y="1177.8" width="3.9" height="2.7" fill="#353b6c"/><rect x="3755.3" y="1198.6" width="3.9" height="4.5" fill="#6a74b0"/><rect x="3703.4" y="1207.0" width="4.4" height="3.9" fill="#353b6c"/><rect x="3742.1" y="1247.2" width="6.3" height="4.1" fill="#5f68a4"/><rect x="3699.4" y="1298.0" width="4.6" height="2.4" fill="#5f68a4"/><rect x="3724.3" y="1339.1" width="4.3" height="3.4" fill="#5f68a4"/><rect x="3697.4" y="1233.9" width="3.4" height="4.2" fill="#353b6c"/><rect x="3711.2" y="1244.6" width="5.3" height="4.0" fill="#6a74b0"/><rect x="3682.0" y="1302.8" width="3.3" height="2.5" fill="#353b6c"/><rect x="3729.3" y="1255.2" width="6.1" height="2.8" fill="#5f68a4"/><rect x="3672.4" y="1282.8" width="4.3" height="4.3" fill="#2e3460"/><rect x="3731.0" y="1267.8" width="6.7" height="4.3" fill="#2e3460"/><rect x="3698.6" y="1307.5" width="4.2" height="2.8" fill="#6a74b0"/><rect x="3761.9" y="1295.1" width="5.1" height="2.2" fill="#2e3460"/><rect x="3649.2" y="1286.1" width="5.3" height="4.0" fill="#2e3460"/><rect x="3741.5" y="1263.0" width="6.3" height="3.4" fill="#5f68a4"/><rect x="3657.0" y="1248.4" width="6.4" height="4.0" fill="#5f68a4"/><rect x="3707.9" y="1263.6" width="5.3" height="4.4" fill="#6a74b0"/><rect x="3653.9" y="1264.0" width="6.2" height="2.2" fill="#353b6c"/><rect x="3679.0" y="1189.2" width="4.3" height="2.1" fill="#5f68a4"/><rect x="3657.9" y="1309.7" width="4.7" height="3.8" fill="#6a74b0"/><rect x="3737.7" y="1259.8" width="6.1" height="3.0" fill="#2e3460"/><rect x="3742.7" y="1227.8" width="3.5" height="3.2" fill="#353b6c"/><rect x="3730.9" y="1326.5" width="4.6" height="4.1" fill="#2e3460"/><rect x="3748.2" y="1308.0" width="6.3" height="4.2" fill="#353b6c"/><rect x="3708.8" y="1291.7" width="6.2" height="3.1" fill="#6a74b0"/><rect x="3755.6" y="1213.0" width="3.6" height="3.6" fill="#5f68a4"/><rect x="3684.6" y="1237.3" width="5.1" height="2.7" fill="#353b6c"/><rect x="3702.6" y="1295.2" width="4.2" height="2.4" fill="#5f68a4"/><rect x="3755.2" y="1299.0" width="3.1" height="3.2" fill="#353b6c"/><rect x="3683.6" y="1204.8" width="4.4" height="3.5" fill="#6a74b0"/><rect x="3717.3" y="1209.3" width="3.7" height="2.7" fill="#5f68a4"/><rect x="3755.0" y="1330.3" width="5.5" height="4.4" fill="#6a74b0"/><rect x="3748.2" y="1253.5" width="4.6" height="4.4" fill="#353b6c"/><rect x="3703.9" y="1208.8" width="3.2" height="4.4" fill="#6a74b0"/><rect x="3762.8" y="1306.1" width="6.1" height="4.0" fill="#353b6c"/><rect x="3724.8" y="1211.6" width="3.0" height="3.2" fill="#2e3460"/><rect x="3700.0" y="1213.1" width="4.7" height="4.2" fill="#6a74b0"/><rect x="3665.0" y="1225.9" width="4.0" height="4.2" fill="#5f68a4"/><rect x="3722.4" y="1339.7" width="4.1" height="3.3" fill="#5f68a4"/><rect x="3714.6" y="1201.5" width="3.8" height="4.3" fill="#5f68a4"/><rect x="3744.5" y="1185.3" width="4.1" height="3.8" fill="#353b6c"/><rect x="3752.5" y="1289.0" width="3.3" height="3.9" fill="#2e3460"/><rect x="3648.6" y="1203.1" width="3.8" height="3.7" fill="#6a74b0"/><rect x="3671.2" y="1263.5" width="5.1" height="2.4" fill="#2e3460"/><rect x="3684.0" y="1240.1" width="5.2" height="4.5" fill="#353b6c"/><rect x="3689.2" y="1287.8" width="3.4" height="3.0" fill="#6a74b0"/><rect x="3735.4" y="1304.3" width="3.5" height="3.1" fill="#6a74b0"/><rect x="3731.3" y="1251.9" width="4.2" height="2.3" fill="#353b6c"/><rect x="3748.5" y="1314.5" width="5.9" height="4.3" fill="#5f68a4"/><rect x="3681.0" y="1235.1" width="5.2" height="2.7" fill="#2e3460"/><rect x="3736.4" y="1265.5" width="3.3" height="2.5" fill="#6a74b0"/><rect x="3733.6" y="1227.2" width="6.8" height="3.4" fill="#2e3460"/><rect x="3699.7" y="1236.2" width="3.4" height="3.6" fill="#5f68a4"/><rect x="3727.2" y="1291.4" width="3.7" height="3.0" fill="#6a74b0"/><rect x="3717.1" y="1186.6" width="3.9" height="2.4" fill="#353b6c"/><rect x="3698.1" y="1302.1" width="4.4" height="4.1" fill="#5f68a4"/><rect x="3723.6" y="1301.4" width="6.3" height="3.0" fill="#2e3460"/><rect x="3756.3" y="1277.0" width="5.9" height="3.5" fill="#2e3460"/><rect x="3763.5" y="1305.2" width="5.6" height="3.5" fill="#353b6c"/><rect x="3677.4" y="1203.3" width="4.2" height="3.1" fill="#6a74b0"/><rect x="3670.8" y="1227.7" width="4.2" height="2.3" fill="#5f68a4"/><rect x="3676.6" y="1262.7" width="4.2" height="2.6" fill="#5f68a4"/><rect x="3714.9" y="1204.9" width="6.7" height="4.5" fill="#5f68a4"/><rect x="3714.0" y="1175.8" width="5.6" height="3.9" fill="#5f68a4"/><rect x="3675.5" y="1269.1" width="5.8" height="2.8" fill="#2e3460"/><rect x="3678.1" y="1321.1" width="4.8" height="3.8" fill="#5f68a4"/><rect x="3754.2" y="1263.5" width="5.2" height="3.4" fill="#2e3460"/><rect x="3666.4" y="1297.8" width="6.6" height="2.8" fill="#5f68a4"/><rect x="3660.9" y="1311.2" width="4.2" height="4.2" fill="#5f68a4"/><rect x="3736.8" y="1232.9" width="3.7" height="3.5" fill="#353b6c"/><rect x="3700.5" y="1239.7" width="6.1" height="4.3" fill="#5f68a4"/><rect x="3683.0" y="1285.1" width="6.0" height="3.0" fill="#353b6c"/><rect x="3665.2" y="1241.2" width="3.1" height="3.3" fill="#353b6c"/><rect x="3714.3" y="1200.8" width="5.1" height="2.7" fill="#2e3460"/><rect x="3652.7" y="1304.3" width="5.9" height="4.0" fill="#6a74b0"/><rect x="3760.8" y="1273.1" width="4.9" height="3.0" fill="#6a74b0"/><rect x="3736.1" y="1253.7" width="7.0" height="4.1" fill="#6a74b0"/><rect x="3744.8" y="1191.2" width="3.5" height="4.3" fill="#2e3460"/><rect x="3709.0" y="1244.6" width="6.6" height="2.8" fill="#353b6c"/><rect x="3681.6" y="1275.8" width="4.7" height="2.9" fill="#2e3460"/><rect x="3736.1" y="1223.0" width="5.4" height="2.2" fill="#353b6c"/><rect x="3747.1" y="1212.4" width="6.5" height="4.4" fill="#6a74b0"/><rect x="3729.3" y="1260.5" width="4.0" height="2.8" fill="#6a74b0"/><rect x="3758.6" y="1320.5" width="7.0" height="3.8" fill="#2e3460"/><rect x="3749.8" y="1242.8" width="6.2" height="2.6" fill="#6a74b0"/><rect x="3714.0" y="1324.5" width="3.4" height="4.0" fill="#353b6c"/><rect x="3751.6" y="1269.0" width="4.8" height="2.7" fill="#2e3460"/><rect x="3649.2" y="1200.5" width="4.8" height="3.1" fill="#6a74b0"/><rect x="3663.2" y="1288.7" width="3.9" height="2.8" fill="#6a74b0"/><rect x="3753.6" y="1223.5" width="5.0" height="4.3" fill="#6a74b0"/><rect x="3751.2" y="1205.7" width="6.4" height="3.7" fill="#353b6c"/><rect x="3669.6" y="1313.4" width="4.4" height="3.2" fill="#5f68a4"/><rect x="3722.2" y="1289.7" width="5.2" height="3.3" fill="#5f68a4"/><rect x="3669.2" y="1320.6" width="3.2" height="2.3" fill="#2e3460"/><rect x="3761.1" y="1217.8" width="4.7" height="4.2" fill="#2e3460"/><rect x="3729.4" y="1330.4" width="4.8" height="2.2" fill="#5f68a4"/><rect x="3749.2" y="1191.8" width="5.8" height="2.7" fill="#5f68a4"/><rect x="3706.2" y="1221.4" width="4.1" height="4.0" fill="#353b6c"/><rect x="3716.7" y="1210.1" width="4.2" height="4.3" fill="#5f68a4"/><rect x="3679.4" y="1279.8" width="3.4" height="4.5" fill="#6a74b0"/><rect x="3755.8" y="1183.8" width="6.6" height="2.0" fill="#2e3460"/><rect x="3710.4" y="1243.1" width="5.3" height="2.4" fill="#5f68a4"/><rect x="3675.7" y="1218.6" width="5.2" height="2.5" fill="#5f68a4"/><rect x="3764.2" y="1177.0" width="4.8" height="3.9" fill="#6a74b0"/><rect x="3646.6" y="1322.5" width="3.2" height="2.2" fill="#2e3460"/><rect x="3684.6" y="1253.3" width="3.1" height="2.7" fill="#5f68a4"/><rect x="3717.2" y="1302.1" width="3.4" height="3.1" fill="#6a74b0"/><rect x="3711.7" y="1214.7" width="5.9" height="3.8" fill="#2e3460"/><rect x="3704.7" y="1208.8" width="5.3" height="3.2" fill="#353b6c"/><rect x="3670.5" y="1335.9" width="3.2" height="3.1" fill="#5f68a4"/><rect x="3685.1" y="1274.5" width="5.4" height="4.0" fill="#6a74b0"/><rect x="3732.6" y="1316.6" width="3.1" height="2.3" fill="#5f68a4"/><rect x="3714.2" y="1263.4" width="6.2" height="2.6" fill="#5f68a4"/><rect x="3652.7" y="1243.4" width="5.8" height="4.0" fill="#2e3460"/><rect x="3737.7" y="1255.8" width="5.6" height="3.3" fill="#6a74b0"/><rect x="3676.7" y="1198.4" width="5.8" height="4.1" fill="#6a74b0"/><rect x="3653.6" y="1240.9" width="4.5" height="2.5" fill="#353b6c"/><rect x="3661.6" y="1299.4" width="5.4" height="2.3" fill="#6a74b0"/><rect x="3708.6" y="1338.5" width="3.0" height="3.0" fill="#5f68a4"/><rect x="3657.2" y="1265.6" width="4.9" height="4.3" fill="#353b6c"/><rect x="3727.5" y="1292.9" width="6.9" height="3.5" fill="#2e3460"/><rect x="3676.5" y="1264.9" width="4.0" height="3.2" fill="#5f68a4"/><rect x="3689.8" y="1228.5" width="6.9" height="3.5" fill="#353b6c"/><rect x="3665.5" y="1270.6" width="7.0" height="3.8" fill="#5f68a4"/><rect x="3701.5" y="1237.9" width="6.4" height="3.0" fill="#353b6c"/><rect x="3672.0" y="1230.2" width="3.7" height="3.4" fill="#5f68a4"/><rect x="3703.6" y="1239.2" width="5.4" height="3.9" fill="#6a74b0"/><rect x="3699.7" y="1339.8" width="5.7" height="4.2" fill="#5f68a4"/><rect x="3710.8" y="1242.4" width="3.2" height="2.7" fill="#2e3460"/><rect x="3720.4" y="1259.3" width="6.0" height="3.3" fill="#5f68a4"/><rect x="3678.4" y="1232.5" width="3.6" height="4.3" fill="#2e3460"/><rect x="3662.7" y="1212.2" width="6.4" height="2.3" fill="#2e3460"/><rect x="3746.5" y="1247.6" width="6.4" height="3.0" fill="#2e3460"/><rect x="3738.3" y="1259.4" width="3.2" height="3.0" fill="#5f68a4"/><rect x="3704.6" y="1203.1" width="5.1" height="2.3" fill="#5f68a4"/><rect x="3683.6" y="1243.2" width="5.2" height="2.3" fill="#2e3460"/><rect x="3683.8" y="1247.9" width="4.5" height="4.2" fill="#2e3460"/><rect x="3710.2" y="1247.5" width="3.5" height="3.3" fill="#2e3460"/><rect x="3673.3" y="1220.8" width="4.4" height="2.5" fill="#353b6c"/><rect x="3747.6" y="1298.0" width="4.9" height="2.0" fill="#2e3460"/><rect x="3725.2" y="1182.6" width="6.4" height="3.4" fill="#2e3460"/><rect x="3725.9" y="1333.3" width="6.5" height="2.6" fill="#2e3460"/><rect x="3657.0" y="1243.8" width="4.6" height="2.2" fill="#6a74b0"/><rect x="3757.4" y="1219.6" width="5.8" height="2.6" fill="#6a74b0"/><rect x="3670.4" y="1301.6" width="4.4" height="3.8" fill="#353b6c"/><rect x="3735.0" y="1325.2" width="6.2" height="3.2" fill="#2e3460"/><rect x="3730.0" y="1265.1" width="5.8" height="2.1" fill="#6a74b0"/><rect x="3660.7" y="1325.6" width="6.6" height="2.7" fill="#6a74b0"/><rect x="3705.5" y="1270.7" width="4.9" height="2.8" fill="#2e3460"/><rect x="3654.9" y="1177.3" width="4.3" height="2.9" fill="#2e3460"/><rect x="3677.6" y="1284.6" width="3.7" height="3.2" fill="#2e3460"/><rect x="3760.3" y="1232.8" width="5.3" height="4.4" fill="#353b6c"/><rect x="3721.2" y="1276.6" width="4.6" height="3.0" fill="#2e3460"/><rect x="3654.5" y="1250.0" width="4.8" height="4.4" fill="#6a74b0"/><rect x="3650.9" y="1194.3" width="5.0" height="2.8" fill="#2e3460"/><rect x="3702.8" y="1174.9" width="5.4" height="2.7" fill="#2e3460"/><rect x="3727.5" y="1211.1" width="3.0" height="3.4" fill="#6a74b0"/><rect x="3646.7" y="1264.1" width="6.4" height="3.9" fill="#353b6c"/><rect x="3720.9" y="1266.4" width="6.3" height="4.4" fill="#2e3460"/><rect x="3677.8" y="1188.9" width="3.1" height="4.0" fill="#5f68a4"/><rect x="3729.3" y="1287.7" width="6.9" height="4.1" fill="#5f68a4"/><rect x="3686.1" y="1288.2" width="6.2" height="2.7" fill="#6a74b0"/><rect x="3680.4" y="1298.3" width="5.1" height="2.6" fill="#5f68a4"/><rect x="3689.5" y="1291.1" width="6.7" height="3.8" fill="#353b6c"/><rect x="3764.4" y="1310.0" width="6.5" height="2.8" fill="#6a74b0"/><rect x="3707.5" y="1286.5" width="3.2" height="3.6" fill="#6a74b0"/><rect x="3750.2" y="1180.4" width="4.0" height="3.3" fill="#6a74b0"/><rect x="3676.5" y="1279.0" width="4.5" height="3.7" fill="#5f68a4"/><rect x="3686.2" y="1300.1" width="6.4" height="4.1" fill="#6a74b0"/><rect x="3722.9" y="1192.6" width="6.0" height="2.7" fill="#5f68a4"/><rect x="3661.3" y="1235.2" width="5.7" height="2.6" fill="#5f68a4"/><rect x="3762.6" y="1251.3" width="5.8" height="4.0" fill="#5f68a4"/><rect x="3678.3" y="1217.3" width="4.0" height="3.7" fill="#6a74b0"/><rect x="3757.7" y="1339.0" width="3.2" height="3.8" fill="#353b6c"/><rect x="3750.3" y="1204.2" width="4.4" height="3.3" fill="#353b6c"/><rect x="3694.6" y="1324.7" width="6.3" height="4.1" fill="#5f68a4"/><rect x="3690.9" y="1223.7" width="6.2" height="4.1" fill="#2e3460"/><rect x="3673.0" y="1293.7" width="4.6" height="2.4" fill="#6a74b0"/><rect x="3726.9" y="1208.0" width="4.1" height="4.2" fill="#6a74b0"/><rect x="3667.2" y="1189.5" width="6.7" height="2.6" fill="#6a74b0"/><rect x="3698.0" y="1197.1" width="6.5" height="2.7" fill="#5f68a4"/><rect x="3679.0" y="1239.2" width="4.3" height="2.2" fill="#5f68a4"/><rect x="3690.0" y="1215.3" width="3.2" height="2.2" fill="#2e3460"/><rect x="3726.3" y="1172.0" width="4.3" height="2.3" fill="#5f68a4"/><rect x="3764.7" y="1240.6" width="3.1" height="2.9" fill="#6a74b0"/><rect x="3712.8" y="1207.8" width="5.5" height="4.1" fill="#2e3460"/><rect x="3679.4" y="1330.5" width="6.5" height="4.5" fill="#6a74b0"/><rect x="3714.5" y="1330.9" width="3.2" height="4.1" fill="#5f68a4"/><rect x="3710.7" y="1285.8" width="4.1" height="2.1" fill="#2e3460"/><rect x="3653.8" y="1250.3" width="6.5" height="2.2" fill="#2e3460"/><rect x="3647.6" y="1260.7" width="6.2" height="4.0" fill="#6a74b0"/><rect x="3694.0" y="1307.5" width="6.3" height="3.9" fill="#353b6c"/><rect x="3758.1" y="1253.1" width="6.4" height="3.0" fill="#353b6c"/><rect x="3647.4" y="1195.2" width="4.3" height="3.8" fill="#2e3460"/><rect x="3743.1" y="1233.1" width="5.6" height="2.9" fill="#2e3460"/><rect x="3654.3" y="1282.1" width="5.4" height="2.7" fill="#5f68a4"/><rect x="3734.9" y="1207.1" width="6.0" height="3.4" fill="#5f68a4"/><rect x="3667.5" y="1189.2" width="3.6" height="2.9" fill="#6a74b0"/><rect x="3648.9" y="1239.1" width="3.2" height="2.2" fill="#5f68a4"/><rect x="3648.8" y="1200.9" width="3.3" height="3.5" fill="#2e3460"/><rect x="3697.7" y="1334.6" width="3.9" height="3.0" fill="#5f68a4"/><rect x="3743.3" y="1183.2" width="4.6" height="4.3" fill="#5f68a4"/><rect x="3739.2" y="1260.4" width="3.0" height="3.8" fill="#6a74b0"/><rect x="3755.1" y="1180.7" width="5.5" height="2.9" fill="#6a74b0"/><rect x="3748.5" y="1277.9" width="5.0" height="3.4" fill="#353b6c"/><rect x="3660.8" y="1296.6" width="6.0" height="3.1" fill="#6a74b0"/><rect x="3696.4" y="1236.5" width="3.9" height="3.5" fill="#353b6c"/><rect x="3707.8" y="1176.8" width="5.5" height="3.1" fill="#353b6c"/><rect x="3717.3" y="1329.3" width="3.6" height="3.2" fill="#2e3460"/><rect x="3734.4" y="1224.4" width="5.9" height="4.5" fill="#6a74b0"/><rect x="3652.6" y="1335.5" width="6.0" height="4.2" fill="#353b6c"/><rect x="3674.3" y="1313.8" width="5.6" height="4.3" fill="#353b6c"/><rect x="3741.5" y="1258.1" width="7.0" height="2.2" fill="#353b6c"/><rect x="3731.3" y="1213.8" width="6.2" height="3.1" fill="#353b6c"/><rect x="3749.6" y="1204.5" width="4.1" height="3.6" fill="#353b6c"/><rect x="3659.1" y="1246.0" width="6.0" height="4.2" fill="#353b6c"/><rect x="3741.8" y="1316.3" width="6.1" height="3.4" fill="#353b6c"/><rect x="3741.4" y="1197.0" width="4.5" height="2.3" fill="#353b6c"/><rect x="3757.2" y="1333.3" width="3.9" height="2.7" fill="#6a74b0"/><rect x="3668.0" y="1237.2" width="6.4" height="3.5" fill="#6a74b0"/><rect x="3654.9" y="1338.8" width="3.8" height="3.6" fill="#5f68a4"/><rect x="3713.2" y="1339.9" width="4.5" height="4.0" fill="#2e3460"/><rect x="3747.2" y="1331.7" width="5.6" height="2.5" fill="#5f68a4"/><rect x="3667.9" y="1193.0" width="5.8" height="3.2" fill="#5f68a4"/><rect x="3679.5" y="1215.2" width="4.4" height="3.6" fill="#2e3460"/><rect x="3669.7" y="1340.0" width="5.8" height="3.8" fill="#2e3460"/><rect x="3750.2" y="1301.9" width="3.8" height="2.2" fill="#2e3460"/><rect x="3697.0" y="1310.4" width="4.6" height="3.1" fill="#353b6c"/><rect x="3758.7" y="1230.0" width="5.8" height="2.6" fill="#353b6c"/><rect x="3680.3" y="1319.3" width="4.1" height="4.1" fill="#6a74b0"/><rect x="3673.2" y="1252.3" width="3.8" height="3.0" fill="#5f68a4"/><rect x="3699.8" y="1182.2" width="4.7" height="2.7" fill="#6a74b0"/><rect x="3724.9" y="1216.7" width="5.6" height="2.0" fill="#5f68a4"/><rect x="3648.1" y="1234.9" width="5.4" height="4.2" fill="#6a74b0"/><rect x="3696.5" y="1229.2" width="6.3" height="4.1" fill="#353b6c"/><rect x="3711.5" y="1188.2" width="6.6" height="2.2" fill="#2e3460"/><rect x="3648.2" y="1176.4" width="5.4" height="3.7" fill="#353b6c"/><rect x="3726.1" y="1197.7" width="3.3" height="2.4" fill="#2e3460"/><rect x="3703.6" y="1281.9" width="3.2" height="2.6" fill="#353b6c"/><rect x="3764.8" y="1238.3" width="6.3" height="3.6" fill="#353b6c"/><rect x="3765.4" y="1182.6" width="4.8" height="3.0" fill="#5f68a4"/><rect x="3708.1" y="1270.4" width="5.0" height="4.1" fill="#6a74b0"/><rect x="3657.8" y="1306.1" width="3.0" height="4.4" fill="#2e3460"/><rect x="3725.5" y="1335.8" width="4.9" height="4.2" fill="#6a74b0"/><rect x="3702.3" y="1174.0" width="6.4" height="4.4" fill="#353b6c"/><rect x="3659.3" y="1241.3" width="5.2" height="4.4" fill="#353b6c"/><rect x="3682.3" y="1257.3" width="3.5" height="3.4" fill="#5f68a4"/><rect x="3725.4" y="1257.7" width="4.2" height="2.9" fill="#5f68a4"/><rect x="3675.8" y="1241.5" width="3.2" height="2.5" fill="#6a74b0"/><rect x="3666.6" y="1189.0" width="3.6" height="4.2" fill="#5f68a4"/><rect x="3663.5" y="1267.0" width="3.7" height="3.5" fill="#353b6c"/><rect x="3695.7" y="1173.1" width="3.6" height="4.0" fill="#6a74b0"/><rect x="3665.0" y="1261.4" width="3.1" height="2.3" fill="#2e3460"/><rect x="3755.2" y="1263.4" width="6.1" height="3.9" fill="#6a74b0"/><rect x="3696.0" y="1184.6" width="4.0" height="2.3" fill="#6a74b0"/><rect x="3685.6" y="1254.2" width="5.6" height="4.2" fill="#5f68a4"/><rect x="3714.1" y="1256.3" width="6.6" height="3.0" fill="#2e3460"/><rect x="3678.2" y="1273.0" width="3.9" height="2.2" fill="#6a74b0"/><rect x="3692.2" y="1281.3" width="4.3" height="2.3" fill="#2e3460"/><rect x="3746.1" y="1181.8" width="5.1" height="3.4" fill="#6a74b0"/><rect x="3744.0" y="1285.8" width="5.9" height="2.1" fill="#2e3460"/><rect x="3704.1" y="1210.4" width="6.0" height="3.2" fill="#353b6c"/><rect x="3690.9" y="1271.9" width="3.4" height="3.7" fill="#2e3460"/><rect x="3761.0" y="1233.3" width="5.4" height="2.9" fill="#2e3460"/><rect x="3671.3" y="1300.6" width="3.2" height="2.5" fill="#353b6c"/><rect x="3707.9" y="1299.1" width="3.2" height="2.2" fill="#2e3460"/><rect x="3716.7" y="1308.3" width="6.8" height="3.6" fill="#2e3460"/><rect x="3694.3" y="1219.8" width="5.7" height="2.2" fill="#5f68a4"/><rect x="3745.6" y="1227.0" width="4.3" height="4.0" fill="#2e3460"/><rect x="3723.0" y="1180.9" width="6.1" height="2.1" fill="#353b6c"/><rect x="3712.2" y="1328.6" width="5.6" height="2.1" fill="#5f68a4"/><rect x="3715.5" y="1172.2" width="5.9" height="3.0" fill="#353b6c"/><rect x="3666.9" y="1185.5" width="5.7" height="2.4" fill="#6a74b0"/><rect x="3727.2" y="1307.2" width="4.8" height="4.2" fill="#353b6c"/><rect x="3746.0" y="1333.5" width="4.4" height="4.1" fill="#353b6c"/><rect x="3730.2" y="1238.7" width="5.8" height="3.6" fill="#353b6c"/><rect x="3756.4" y="1207.1" width="4.7" height="3.3" fill="#353b6c"/><rect x="3664.8" y="1217.8" width="4.6" height="4.2" fill="#6a74b0"/><rect x="3670.2" y="1290.5" width="5.0" height="3.1" fill="#6a74b0"/><rect x="3707.4" y="1253.0" width="5.2" height="4.1" fill="#2e3460"/><rect x="3670.4" y="1230.0" width="3.7" height="2.9" fill="#6a74b0"/><rect x="3700.4" y="1271.2" width="4.8" height="3.9" fill="#5f68a4"/><rect x="3703.7" y="1337.6" width="4.3" height="3.7" fill="#5f68a4"/><rect x="3721.8" y="1230.8" width="4.6" height="2.1" fill="#353b6c"/><rect x="3742.1" y="1214.5" width="4.0" height="2.5" fill="#353b6c"/><rect x="3713.1" y="1336.8" width="6.6" height="3.1" fill="#6a74b0"/><rect x="3660.3" y="1202.9" width="5.5" height="3.7" fill="#5f68a4"/><rect x="3650.5" y="1289.8" width="5.3" height="3.4" fill="#2e3460"/><rect x="3704.8" y="1247.1" width="6.9" height="2.9" fill="#2e3460"/><rect x="3658.0" y="1304.3" width="3.9" height="2.5" fill="#2e3460"/><rect x="3660.7" y="1301.0" width="5.3" height="4.2" fill="#2e3460"/><rect x="3728.6" y="1233.0" width="6.8" height="3.8" fill="#2e3460"/><rect x="3718.9" y="1312.2" width="6.9" height="2.3" fill="#2e3460"/><rect x="3648.7" y="1262.4" width="4.0" height="2.7" fill="#2e3460"/><rect x="3713.3" y="1215.8" width="3.3" height="2.1" fill="#2e3460"/><rect x="3758.9" y="1197.1" width="4.6" height="4.1" fill="#5f68a4"/><rect x="3719.1" y="1263.5" width="5.9" height="3.3" fill="#2e3460"/><rect x="3682.9" y="1243.7" width="6.1" height="3.6" fill="#5f68a4"/><rect x="3703.7" y="1287.7" width="4.4" height="2.5" fill="#2e3460"/><rect x="3713.9" y="1230.4" width="3.9" height="4.4" fill="#353b6c"/><rect x="3714.9" y="1328.5" width="6.0" height="2.8" fill="#353b6c"/><rect x="3658.5" y="1267.2" width="3.5" height="4.5" fill="#2e3460"/><rect x="3688.5" y="1195.2" width="6.8" height="3.7" fill="#5f68a4"/><rect x="3649.8" y="1268.1" width="6.9" height="3.7" fill="#353b6c"/><rect x="3698.5" y="1286.5" width="3.3" height="3.7" fill="#6a74b0"/><rect x="3756.8" y="1320.5" width="3.4" height="2.3" fill="#5f68a4"/><rect x="3655.7" y="1253.9" width="5.2" height="4.4" fill="#353b6c"/><rect x="3662.4" y="1222.2" width="4.3" height="3.8" fill="#5f68a4"/><rect x="3762.8" y="1332.4" width="6.7" height="4.1" fill="#353b6c"/><rect x="3719.0" y="1306.2" width="7.0" height="3.4" fill="#2e3460"/><rect x="3757.7" y="1186.0" width="5.1" height="4.4" fill="#353b6c"/><rect x="3659.3" y="1221.8" width="4.2" height="4.5" fill="#6a74b0"/><rect x="3650.1" y="1312.0" width="5.8" height="3.3" fill="#353b6c"/><rect x="3646.4" y="1182.8" width="6.2" height="4.4" fill="#5f68a4"/><rect x="3695.0" y="1228.2" width="4.4" height="2.0" fill="#5f68a4"/><rect x="3677.6" y="1270.6" width="5.1" height="2.8" fill="#2e3460"/><rect x="3700.6" y="1211.1" width="6.5" height="2.4" fill="#5f68a4"/><rect x="3671.5" y="1247.8" width="3.9" height="4.3" fill="#5f68a4"/><rect x="3674.7" y="1282.3" width="4.0" height="3.3" fill="#2e3460"/><rect x="3714.8" y="1175.1" width="4.2" height="2.2" fill="#2e3460"/><rect x="3734.6" y="1206.0" width="3.1" height="2.6" fill="#353b6c"/><rect x="3655.7" y="1300.8" width="4.0" height="2.5" fill="#6a74b0"/><rect x="3712.8" y="1194.7" width="5.7" height="2.2" fill="#353b6c"/><rect x="3764.6" y="1237.0" width="3.5" height="4.0" fill="#5f68a4"/><rect x="3686.7" y="1305.4" width="4.5" height="2.7" fill="#353b6c"/><rect x="3703.1" y="1310.1" width="3.1" height="3.2" fill="#6a74b0"/><rect x="3760.2" y="1243.4" width="3.6" height="2.2" fill="#5f68a4"/><rect x="3751.1" y="1334.2" width="6.7" height="2.9" fill="#5f68a4"/><rect x="3663.2" y="1292.5" width="6.8" height="2.5" fill="#5f68a4"/><rect x="3730.1" y="1211.5" width="6.4" height="4.2" fill="#6a74b0"/><rect x="3690.2" y="1294.6" width="6.7" height="2.4" fill="#353b6c"/><rect x="3763.7" y="1294.3" width="5.7" height="2.3" fill="#2e3460"/><rect x="3668.1" y="1192.1" width="5.1" height="3.4" fill="#6a74b0"/><rect x="3737.3" y="1260.6" width="6.8" height="2.2" fill="#5f68a4"/><rect x="3648.3" y="1327.6" width="6.9" height="4.3" fill="#5f68a4"/><rect x="3665.4" y="1227.3" width="5.3" height="2.7" fill="#6a74b0"/><rect x="3688.1" y="1340.5" width="5.0" height="2.1" fill="#5f68a4"/><rect x="3759.0" y="1337.2" width="3.1" height="3.9" fill="#6a74b0"/><rect x="3711.2" y="1219.1" width="3.2" height="3.0" fill="#5f68a4"/><rect x="3761.1" y="1175.4" width="4.7" height="4.4" fill="#353b6c"/><rect x="3701.8" y="1202.3" width="3.1" height="2.8" fill="#353b6c"/><rect x="3686.5" y="1315.1" width="5.2" height="3.7" fill="#2e3460"/><rect x="3720.8" y="1225.1" width="4.4" height="4.2" fill="#6a74b0"/><rect x="3697.6" y="1270.8" width="4.0" height="4.4" fill="#6a74b0"/><rect x="3674.2" y="1330.0" width="6.4" height="4.2" fill="#5f68a4"/><rect x="3702.2" y="1266.5" width="6.7" height="3.9" fill="#2e3460"/><rect x="3674.4" y="1270.3" width="3.6" height="4.4" fill="#2e3460"/><rect x="3722.6" y="1278.8" width="3.0" height="3.2" fill="#353b6c"/><rect x="3705.7" y="1327.8" width="5.1" height="2.9" fill="#353b6c"/><rect x="3725.4" y="1239.3" width="5.0" height="4.1" fill="#6a74b0"/><rect x="3653.0" y="1225.5" width="5.6" height="2.2" fill="#5f68a4"/><rect x="3762.1" y="1218.8" width="4.8" height="2.2" fill="#353b6c"/><rect x="3674.3" y="1311.9" width="6.2" height="2.6" fill="#353b6c"/><rect x="3697.2" y="1265.5" width="6.8" height="3.2" fill="#6a74b0"/><rect x="3664.4" y="1224.9" width="5.7" height="3.3" fill="#5f68a4"/><rect x="3723.5" y="1288.3" width="4.8" height="2.7" fill="#5f68a4"/><rect x="3728.1" y="1306.5" width="5.8" height="4.0" fill="#5f68a4"/><rect x="3660.3" y="1252.0" width="5.9" height="2.1" fill="#353b6c"/><rect x="3760.5" y="1282.9" width="4.9" height="3.6" fill="#6a74b0"/><rect x="3757.6" y="1280.6" width="3.3" height="3.7" fill="#353b6c"/><rect x="3677.3" y="1220.2" width="4.6" height="2.6" fill="#2e3460"/><rect x="3763.9" y="1276.9" width="3.5" height="3.8" fill="#353b6c"/><rect x="3698.4" y="1240.4" width="4.6" height="3.9" fill="#353b6c"/><rect x="3714.3" y="1331.3" width="5.6" height="3.2" fill="#6a74b0"/><rect x="3731.2" y="1177.9" width="6.5" height="3.2" fill="#5f68a4"/><rect x="3673.9" y="1276.2" width="3.5" height="2.4" fill="#6a74b0"/><rect x="3684.0" y="1217.6" width="3.7" height="3.6" fill="#353b6c"/><rect x="3685.8" y="1328.5" width="6.6" height="2.7" fill="#2e3460"/><rect x="3761.2" y="1302.6" width="4.3" height="2.7" fill="#6a74b0"/><rect x="3654.2" y="1187.7" width="5.8" height="2.1" fill="#5f68a4"/><rect x="3680.7" y="1329.5" width="4.5" height="3.1" fill="#6a74b0"/><rect x="3654.7" y="1180.1" width="4.4" height="3.3" fill="#6a74b0"/><rect x="3672.0" y="1327.4" width="6.2" height="4.3" fill="#353b6c"/><rect x="3660.9" y="1244.7" width="5.7" height="3.9" fill="#2e3460"/><rect x="3716.3" y="1242.5" width="3.0" height="2.2" fill="#5f68a4"/><rect x="3737.8" y="1181.0" width="3.6" height="3.4" fill="#2e3460"/><rect x="3740.3" y="1270.5" width="6.7" height="2.7" fill="#353b6c"/><rect x="3730.6" y="1248.7" width="4.7" height="2.3" fill="#6a74b0"/><rect x="3669.4" y="1214.1" width="6.6" height="3.4" fill="#353b6c"/><rect x="3678.5" y="1289.1" width="4.8" height="2.3" fill="#6a74b0"/><rect x="3705.8" y="1304.4" width="4.0" height="4.0" fill="#5f68a4"/><rect x="3727.6" y="1275.7" width="3.2" height="3.8" fill="#5f68a4"/><rect x="3675.6" y="1268.0" width="4.6" height="3.0" fill="#6a74b0"/><rect x="3733.5" y="1276.3" width="3.8" height="2.6" fill="#6a74b0"/><rect x="3764.1" y="1319.5" width="6.7" height="3.6" fill="#2e3460"/><rect x="3682.6" y="1208.8" width="6.5" height="3.3" fill="#6a74b0"/><rect x="3734.6" y="1318.8" width="3.8" height="2.1" fill="#353b6c"/><rect x="3730.8" y="1247.3" width="4.5" height="3.1" fill="#6a74b0"/><rect x="3698.3" y="1207.1" width="3.1" height="4.2" fill="#353b6c"/><rect x="3700.6" y="1251.6" width="6.5" height="3.1" fill="#6a74b0"/><rect x="3727.2" y="1256.9" width="6.2" height="4.3" fill="#353b6c"/><rect x="3734.8" y="1221.5" width="5.9" height="4.4" fill="#6a74b0"/><rect x="3698.3" y="1282.1" width="3.9" height="3.9" fill="#2e3460"/><rect x="3713.6" y="1237.7" width="6.4" height="2.9" fill="#6a74b0"/><rect x="3677.3" y="1275.4" width="3.9" height="3.0" fill="#5f68a4"/><rect x="3735.5" y="1244.8" width="5.0" height="2.1" fill="#5f68a4"/><rect x="3746.3" y="1237.7" width="5.4" height="3.8" fill="#2e3460"/><rect x="3735.4" y="1269.5" width="4.0" height="3.8" fill="#6a74b0"/><rect x="3711.3" y="1338.7" width="3.5" height="4.0" fill="#2e3460"/><rect x="3743.0" y="1257.6" width="3.1" height="3.9" fill="#2e3460"/><rect x="3709.4" y="1255.3" width="3.7" height="3.6" fill="#6a74b0"/><rect x="3725.5" y="1220.3" width="6.2" height="3.1" fill="#5f68a4"/><rect x="3658.0" y="1179.5" width="4.9" height="3.4" fill="#6a74b0"/><rect x="3714.3" y="1333.0" width="4.4" height="3.9" fill="#353b6c"/><rect x="3647.4" y="1263.9" width="3.7" height="2.9" fill="#5f68a4"/><rect x="3691.7" y="1217.7" width="4.4" height="3.3" fill="#353b6c"/><rect x="3710.7" y="1238.8" width="4.6" height="4.0" fill="#5f68a4"/><rect x="3671.0" y="1175.6" width="6.6" height="3.6" fill="#353b6c"/><rect x="3734.5" y="1216.1" width="5.0" height="3.7" fill="#353b6c"/><rect x="3725.8" y="1220.7" width="4.3" height="3.6" fill="#2e3460"/><rect x="3729.8" y="1228.5" width="6.5" height="2.5" fill="#6a74b0"/><rect x="3730.0" y="1176.0" width="6.7" height="4.0" fill="#2e3460"/><rect x="3719.0" y="1338.7" width="3.9" height="2.6" fill="#2e3460"/><rect x="3664.2" y="1334.8" width="4.4" height="3.1" fill="#6a74b0"/><rect x="3667.3" y="1202.2" width="5.4" height="3.9" fill="#6a74b0"/><rect x="3688.7" y="1291.1" width="3.9" height="4.2" fill="#5f68a4"/><rect x="3703.5" y="1181.3" width="5.0" height="3.7" fill="#353b6c"/><rect x="3737.8" y="1286.7" width="6.8" height="2.1" fill="#2e3460"/><rect x="3651.6" y="1231.2" width="6.9" height="3.5" fill="#6a74b0"/><rect x="3653.8" y="1188.6" width="3.1" height="3.7" fill="#5f68a4"/><rect x="3712.4" y="1178.7" width="3.6" height="3.7" fill="#353b6c"/><rect x="3702.1" y="1220.3" width="5.2" height="2.9" fill="#2e3460"/><rect x="3646.7" y="1328.0" width="4.2" height="2.0" fill="#2e3460"/><rect x="3683.4" y="1271.7" width="4.1" height="2.3" fill="#353b6c"/><rect x="3702.3" y="1258.1" width="4.2" height="4.2" fill="#6a74b0"/><rect x="3729.0" y="1256.2" width="4.7" height="3.0" fill="#2e3460"/></g><path d="M3692,1176 L3716,1172 L3733,1188 L3690,1190 Z" fill="#1e2444"/><path d="M3686.5,1191.4 L3734.3,1190.2 L3718,1210.3 L3699.1,1214 Z" fill="#dde9f8"/></svg>
<div class="t" style="left:204.5px;top:89.8px;font-size:58.5px;color:#ffffff;transform:scaleX(1.0416)">Inventory</div>
<div class="t" style="left:164.4px;top:291.9px;font-size:42.7px;color:#ffffff;transform:scaleX(0.9903)">Incio</div>
<div class="t" style="left:166.9px;top:419.2px;font-size:42.7px;color:#ffffff">Inventario</div>
<div class="t" style="left:168.8px;top:573.4px;font-size:42.7px;color:#ffffff;transform:scaleX(0.9745)">Ventas</div>
<div class="t" style="left:166.8px;top:669.9px;font-size:42.7px;color:#ffffff;transform:scaleX(0.9845)">Compras</div>
<div class="t" style="left:165.8px;top:823.9px;font-size:42.7px;color:#ffffff;transform:scaleX(1.0038)">Integraciones</div>
<div class="t" style="left:166.8px;top:918.9px;font-size:42.7px;color:#ffffff;transform:scaleX(0.9873)">Canales activos</div>
<div class="t" style="left:165.8px;top:1070.9px;font-size:42.7px;color:#ffffff">Informes</div>
<div class="t" style="left:165.8px;top:1222.9px;font-size:42.7px;color:#ffffff;transform:scaleX(1.0030)">Documentos</div>
<div class="t" style="left:1237.0px;top:70.7px;font-size:39px;color:#939393;transform:scaleX(0.9389)">Search</div>
<div class="t" style="left:3250.9px;top:59.1px;font-size:57.8px;color:#000000;transform:scaleX(1.0052)">Zylker</div>
<div class="t" style="left:851.9px;top:292.0px;font-size:67.3px;color:#232323;transform:scaleX(1.0230)">Actividad de ventas</div>
<div class="t" style="left:3104.9px;top:292.0px;font-size:67.3px;color:#232323;transform:scaleX(0.9963)">Resumen de inventario</div>
<div class="t" style="left:992.7px;top:451.6px;font-size:93.8px;color:#1e76d9;transform:scaleX(1.0045)">228</div>
<div class="t" style="left:1543.9px;top:451.7px;font-size:93.8px;color:#e8474c;transform:scaleX(0.9689)">6</div>
<div class="t" style="left:2016.5px;top:451.6px;font-size:93.8px;color:#1ea86a;transform:scaleX(0.9165)">10</div>
<div class="t" style="left:2493.0px;top:451.7px;font-size:93.8px;color:#1e76d9;transform:scaleX(0.9847)">474</div>
<div class="t" style="left:1029.1px;top:552.2px;font-size:37.5px;color:#a0a0a0;transform:scaleX(0.9734)">Cant</div>
<div class="t" style="left:1531.9px;top:552.2px;font-size:37.5px;color:#a0a0a0;transform:scaleX(0.9946)">Pqts</div>
<div class="t" style="left:2028.8px;top:552.2px;font-size:37.5px;color:#a0a0a0">Pqts</div>
<div class="t" style="left:2526.0px;top:552.2px;font-size:37.5px;color:#a0a0a0;transform:scaleX(0.9836)">Cant</div>
<div class="t" style="left:943.0px;top:640.5px;font-size:34.6px;color:#2b2b2b;transform:scaleX(0.9413)">POR EMPAQUETAR</div>
<div class="t" style="left:1499.3px;top:638.4px;font-size:34.6px;color:#2b2b2b;transform:scaleX(0.9125)">POR ENVIAR</div>
<div class="t" style="left:1972.4px;top:638.5px;font-size:34.6px;color:#2b2b2b;transform:scaleX(0.9054)">POR ENTREGAR</div>
<div class="t" style="left:2474.0px;top:640.6px;font-size:34.6px;color:#2b2b2b;transform:scaleX(0.9290)">POR FACTURAR</div>
<div class="t" style="left:3147.0px;top:454.9px;font-size:31.8px;color:#767676;transform:scaleX(0.9584)">CANTIDAD DISPONIBLE</div>
<div class="t" style="left:3711.7px;top:447.1px;font-size:51.7px;color:#232323;transform:scaleX(1.0153)">10458...</div>
<div class="t" style="left:3147.1px;top:634.9px;font-size:31.8px;color:#767676;transform:scaleX(0.9404)">CANTIDAD POR RECIBIR</div>
<div class="t" style="left:3820.0px;top:627.1px;font-size:51.7px;color:#232323">168</div>
<div class="t" style="left:896.0px;top:983.9px;font-size:43.8px;color:#232323;transform:scaleX(0.9308)">DETALLES DEL PRODUCTO</div>
<div class="t" style="left:901.2px;top:1150.4px;font-size:47.8px;color:#e8474c">Artículos con existencias bajas</div>
<div class="t" style="left:1618.8px;top:1146.2px;font-size:52.5px;color:#e8474c">3</div>
<div class="t" style="left:899.2px;top:1258.5px;font-size:47.8px;color:#2a2e33">Grupo de todos los artículos</div>
<div class="t" style="left:1586.1px;top:1254.5px;font-size:52.5px;color:#2a2e33;transform:scaleX(1.0628)">39</div>
<div class="t" style="left:900.2px;top:1363.8px;font-size:47.8px;color:#2a2e33;transform:scaleX(1.0141)">Todos los artículos</div>
<div class="t" style="left:1561.8px;top:1359.8px;font-size:52.5px;color:#2a2e33;transform:scaleX(0.9721)">190</div>
<div class="t" style="left:901.2px;top:1464.5px;font-size:47.8px;color:#e8474c">Artículos sin confirmar</div>
<div class="t" style="left:1571.6px;top:1460.5px;font-size:52.5px;color:#e8474c;transform:scaleX(0.8182)">121</div>
<div class="t" style="left:1917.4px;top:1148.4px;font-size:50.4px;color:#333333;transform:scaleX(1.0042)">Artículos activos</div>
<div class="t" style="left:2064.4px;top:1359.6px;font-size:41.5px;color:#111111;transform:scaleX(0.8495)">71%</div>
<div class="t" style="left:2569.0px;top:983.9px;font-size:43.8px;color:#232323;transform:scaleX(0.9350)">ARTÍCULOS MÁS VENDIDOS</div>
<div class="t" style="left:3659.1px;top:989.3px;font-size:35px;color:#1d1d1d">Año anterior</div>
<div class="t" style="left:2566.9px;top:1385.3px;font-size:33.1px;color:#6e6e6e;transform:scaleX(0.9882)">Hanswooly Cotton Cas...</div>
<div class="t" style="left:3044.6px;top:1385.3px;font-size:33.1px;color:#6e6e6e;transform:scaleX(0.9848)">Cutiepie Rompers-spo...</div>
<div class="t" style="left:3522.0px;top:1385.3px;font-size:33.1px;color:#6e6e6e;transform:scaleX(0.9954)">Cutiepie Rompers-jet b...</div>
<div class="t" style="left:2638.5px;top:1457.1px;font-size:74.7px;color:#2a3035;transform:scaleX(0.8047)">171</div>
<div class="t" style="left:2765.1px;top:1476.3px;font-size:52px;color:#777777;transform:scaleX(1.0270)">pcs</div>
<div class="t" style="left:3132.0px;top:1457.1px;font-size:74.7px;color:#2a3035;transform:scaleX(1.0184)">45</div>
<div class="t" style="left:3239.0px;top:1476.3px;font-size:52px;color:#777777;transform:scaleX(1.0175)">sets</div>
<div class="t" style="left:3614.9px;top:1457.1px;font-size:74.7px;color:#2a3035;transform:scaleX(1.0314)">38</div>
<div class="t" style="left:3721.0px;top:1476.3px;font-size:52px;color:#777777;transform:scaleX(1.0282)">sets</div>
<div class="t" style="left:891.2px;top:1759.9px;font-size:43.5px;color:#232323;transform:scaleX(0.9238)">ORDEN DE COMPRA</div>
<div class="t" style="left:1403.4px;top:1767.5px;font-size:31.3px;color:#1d1d1d;transform:scaleX(0.9742)">Este mes</div>
<div class="t" style="left:1071.4px;top:1935.1px;font-size:43.5px;color:#333333;transform:scaleX(1.0090)">Cantidad pedida</div>
<div class="t" style="left:1157.0px;top:1998.8px;font-size:88px;color:#1e76d9;transform:scaleX(1.0101)">2.00</div>
<div class="t" style="left:1132.3px;top:2211.2px;font-size:44px;color:#333333;transform:scaleX(1.0240)">Coste total</div>
<div class="t" style="left:1030.3px;top:2276.1px;font-size:87.8px;color:#1e76d9">MXN46.92</div>
<div class="t" style="left:1802.6px;top:1759.9px;font-size:43.5px;color:#232323;transform:scaleX(0.9358)">ORDEN DE VENTA</div>
<div class="t" style="left:3729.5px;top:1767.5px;font-size:31.3px;color:#1d1d1d;transform:scaleX(0.9750)">Este mes</div>
<div class="t" style="left:1803.4px;top:1903.4px;font-size:50.8px;color:#2a2a2a;transform:scaleX(0.9691)">Canal</div>
<div class="t" style="left:2197.8px;top:1903.4px;font-size:50.8px;color:#2a2a2a">Borrador</div>
<div class="t" style="left:2518.5px;top:1903.4px;font-size:50.8px;color:#2a2a2a">Confirmado</div>
<div class="t" style="left:2901.0px;top:1903.4px;font-size:50.8px;color:#2a2a2a;transform:scaleX(0.9902)">Empaquetado</div>
<div class="t" style="left:3334.6px;top:1903.4px;font-size:50.8px;color:#2a2a2a;transform:scaleX(0.9870)">Enviado</div>
<div class="t" style="left:3635.0px;top:1903.4px;font-size:50.8px;color:#2a2a2a;transform:scaleX(0.9891)">Facturada</div>
<div class="t" style="left:1804.5px;top:2058.3px;font-size:52.9px;color:#2a2a2a">Ventas Directas</div>
<div class="t" style="left:2257.9px;top:2060.1px;font-size:51.5px;color:#2a2a2a;transform:scaleX(1.0280)">0</div>
<div class="t" style="left:2620.5px;top:2060.1px;font-size:51.5px;color:#2a2a2a;transform:scaleX(1.0514)">50</div>
<div class="t" style="left:2993.4px;top:2060.1px;font-size:51.5px;color:#2a2a2a;transform:scaleX(1.1080)">0</div>
<div class="t" style="left:3367.8px;top:2060.1px;font-size:51.5px;color:#2a2a2a;transform:scaleX(1.0800)">0</div>
<div class="t" style="left:3706.6px;top:2060.1px;font-size:51.5px;color:#2a2a2a">102</div>
</body></html>
